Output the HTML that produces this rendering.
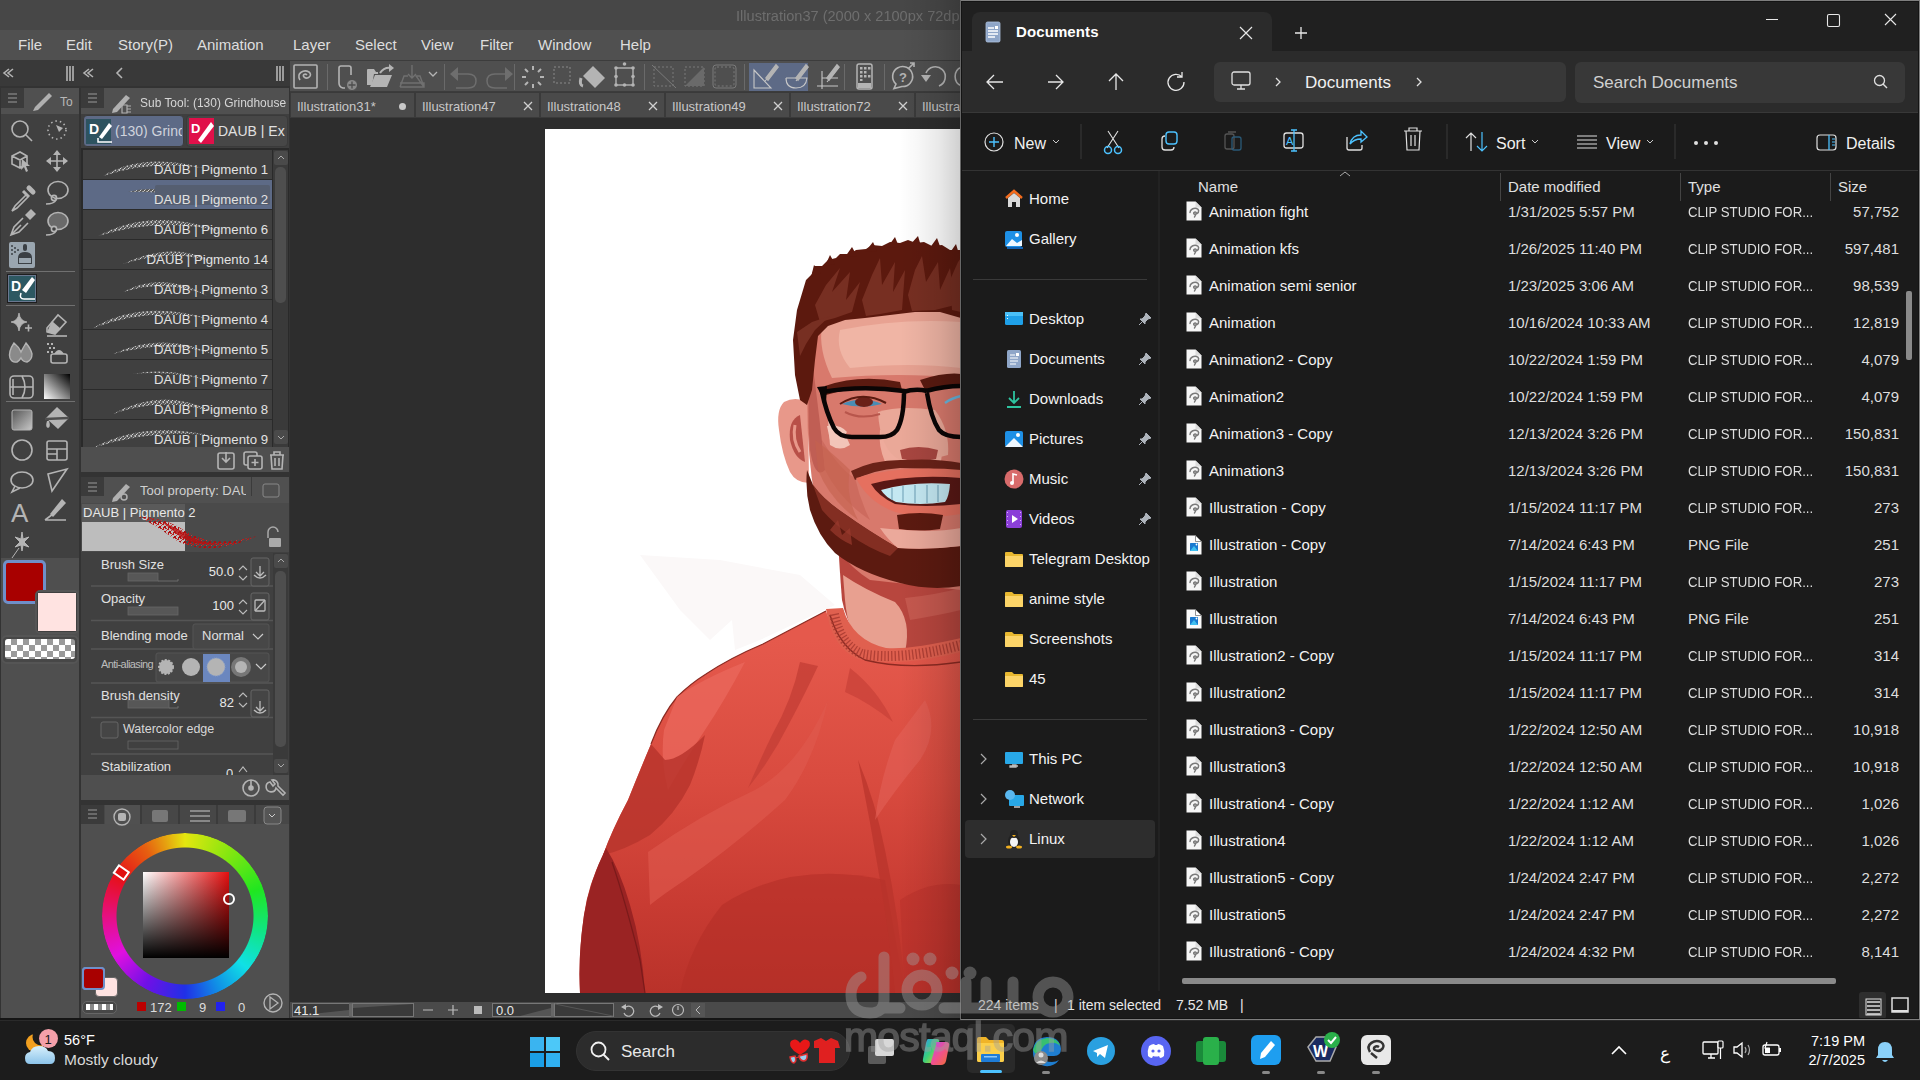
<!DOCTYPE html>
<html><head><meta charset="utf-8">
<style>
*{margin:0;padding:0;box-sizing:border-box}
html,body{width:1920px;height:1080px;overflow:hidden;background:#2d2d2d;font-family:"Liberation Sans",sans-serif}
.a{position:absolute}
.t{position:absolute;white-space:nowrap;line-height:1}
svg{position:absolute;overflow:visible}
/* CSP */
#csp{left:0;top:0;width:961px;height:1020px;background:#2d2d2d;overflow:hidden}
.menu{color:#dedede;font-size:15px;top:37px}
.ico{stroke:#b4b4b4;fill:none;stroke-width:1.6}
.icof{fill:#b4b4b4}
.brow{position:absolute;left:83px;width:189px;height:29px;background:#404040}
.bname{position:absolute;right:4px;top:13px;color:#e2e2e2;font-size:13.2px;white-space:nowrap;line-height:1}
.tab{position:absolute;top:92px;height:26px;background:#4f4f4f;border-right:2px solid #3a3a3a}
.tabt{position:absolute;left:6px;top:7px;color:#c8c8c8;font-size:13px;line-height:1;white-space:nowrap}
/* Explorer */
#exp{left:960px;top:0;width:960px;height:1020px;background:#1b1b1b;border:1px solid #7e7e7e;overflow:hidden}
.nav{color:#f0f0f0;font-size:15px}
.row{position:absolute;left:200px;width:740px;height:37px}
.ex{font-size:15px;color:#dedede;line-height:1;white-space:nowrap}
.rn{position:absolute;left:48px;top:11px;color:#f2f2f2;font-size:15px;line-height:1;white-space:nowrap}
.rd{position:absolute;left:347px;top:11px;color:#dcdcdc;font-size:15px;line-height:1;white-space:nowrap}
.rt{position:absolute;left:527px;top:11px;color:#dcdcdc;font-size:15px;line-height:1;white-space:nowrap}
.rs{position:absolute;right:0px;top:11px;color:#dcdcdc;font-size:15px;line-height:1;white-space:nowrap;text-align:right}
/* taskbar */
#tb{left:0;top:1020px;width:1920px;height:60px;background:#1c1c1c;border-top:1px solid #2a2a2a}
</style></head><body>
<svg width="0" height="0" style="position:absolute"><defs><pattern id="speck" width="7" height="7" patternUnits="userSpaceOnUse"><rect x="0" y="0" width="1" height="1" fill="#a8a8a8"/><rect x="3" y="1" width="1" height="1" fill="#c8c8c8"/><rect x="5" y="3" width="1" height="1" fill="#999"/><rect x="1" y="4" width="1" height="1" fill="#bbb"/><rect x="4" y="5" width="1" height="1" fill="#aaa"/><rect x="2" y="2" width="1" height="1" fill="#888"/><rect x="6" y="6" width="1" height="1" fill="#ccc"/><rect x="0" y="6" width="1" height="1" fill="#999"/><rect x="6" y="0" width="1" height="1" fill="#aaa"/><rect x="2" y="6" width="1" height="1" fill="#bbb"/></pattern><pattern id="speck2" width="4" height="4" patternUnits="userSpaceOnUse"><rect width="4" height="4" fill="#5a5a5a"/><rect x="0" y="0" width="1" height="1" fill="#c8c8c8"/><rect x="2" y="1" width="1" height="1" fill="#aaa"/><rect x="1" y="2" width="1" height="1" fill="#d8d8d8"/><rect x="3" y="3" width="1" height="1" fill="#999"/><rect x="3" y="0" width="1" height="1" fill="#888"/><rect x="0" y="3" width="1" height="1" fill="#b8b8b8"/></pattern><pattern id="rspeck" width="5" height="5" patternUnits="userSpaceOnUse"><rect x="0" y="0" width="2" height="1" fill="#c01a1a"/><rect x="2" y="2" width="2" height="2" fill="#a81010"/><rect x="4" y="1" width="1" height="1" fill="#d03030"/><rect x="1" y="3" width="1" height="2" fill="#b51515"/><rect x="3" y="4" width="2" height="1" fill="#c02020"/></pattern></defs></svg>
<div id="csp" class="a">
  <!-- title bar -->
  <div class="a" style="left:0;top:0;width:961px;height:30px;background:#474747"></div>
  <div class="t" style="left:736px;top:8px;color:#6e6e6e;font-size:15.5px;transform:scaleX(0.94);transform-origin:0 0">Illustration37 (2000 x 2100px 72dpi 41.1%)</div>
  <!-- menu -->
  <div class="a" style="left:0;top:30px;width:961px;height:30px;background:#505050"></div>
  <div class="t menu" style="left:18px">File</div>
  <div class="t menu" style="left:66px">Edit</div>
  <div class="t menu" style="left:118px">Story(P)</div>
  <div class="t menu" style="left:197px">Animation</div>
  <div class="t menu" style="left:293px">Layer</div>
  <div class="t menu" style="left:355px">Select</div>
  <div class="t menu" style="left:421px">View</div>
  <div class="t menu" style="left:480px">Filter</div>
  <div class="t menu" style="left:538px">Window</div>
  <div class="t menu" style="left:620px">Help</div>
  <!-- panel header row -->
  <div class="a" style="left:0;top:60px;width:290px;height:26px;background:#393939"></div>
  <div class="a" style="left:0;top:86px;width:290px;height:934px;background:#333"></div>

  <!-- LEFT PANEL HEADER ICONS -->
  <svg style="left:0;top:60px" width="290" height="26">
    <path d="M9 9 L4 13 L9 17 M13 9 L8 13 L13 17" class="ico" stroke-width="1.2"/>
    <path d="M67 6V21 M70 6V21 M73 6V21" class="ico" stroke-width="1.1"/>
    <path d="M89 9 L84 13 L89 17 M93 9 L88 13 L93 17" class="ico" stroke-width="1.2"/>
    <path d="M122 8 L117 13 L122 18" class="ico" stroke-width="1.2"/>
    <path d="M277 6V21 M280 6V21 M283 6V21" class="ico" stroke-width="1.1"/>
  </svg>
  <!-- TOOL column -->
  <div class="a" style="left:1px;top:88px;width:78px;height:26px;background:#505050"></div>
  <div class="a" style="left:1px;top:88px;width:23px;height:20px;background:#3b3b3b"></div>
  <div class="a" style="left:1px;top:114px;width:78px;height:905px;background:#4f4f4f"></div>
  <div class="a" style="left:1px;top:114px;width:78px;height:444px;background:#404040"></div>
  <svg style="left:0;top:88px" width="80" height="26">
    <path d="M8 6H17 M8 10H17 M8 14H17" stroke="#9a9a9a" stroke-width="1"/>
    <path d="M35 19 L49 5 L52 8 L38 22 L33 23 Z" fill="#b0b0b0"/>
    <text x="60" y="18" fill="#b8b8b8" font-size="12" font-family="Liberation Sans">To</text>
  </svg>
  <svg style="left:0;top:114px" width="80" height="560">
    <g class="ico">
      <circle cx="20" cy="15" r="8"/><path d="M26 21 L32 27"/>
      <circle cx="57" cy="16" r="9" stroke-dasharray="1.5 3"/>
      <path d="M12 42 L20 38 L27 42 V50 L20 54 L12 50 Z M12 42 L20 46 L27 42 M20 46V54"/>
      <path d="M57 37V57 M47 47H67"/>
      <path d="M26 81 L15 92 L12 97 L17 94 L28 83"/>
      <ellipse cx="58" cy="76" rx="10" ry="8.5"/>
      <circle cx="54" cy="84" r="2.6"/><path d="M46 90 Q54 90 56 86"/>
      <path d="M23 104 L14 113 L11 121 L19 118 L28 109 M12 120 L21 111"/>
      <ellipse cx="58" cy="107" rx="10" ry="8.5" fill="#6a6a6a"/>
      <circle cx="54" cy="115" r="2.6" fill="#404040"/><path d="M46 121 Q54 121 56 117"/>
    </g>
    <path d="M29 74 L33 78" stroke="#b4b4b4" stroke-width="5" stroke-linecap="round"/><path d="M23 77 L29 83" stroke="#b4b4b4" stroke-width="3"/><path d="M25 101 L31 95 L36 100 L30 106Z" fill="#b4b4b4"/>
    <path d="M53 41 L57 36 L61 41 Z M53 53 L57 58 L61 53 Z M51 43 L46 47 L51 51 Z M63 43 L68 47 L63 51 Z" class="icof"/>
    <path d="M22 45 L30 52 L26 52 L28 57 L26 58 L24 53 L21 56 Z" class="icof"/>
    <path d="M56 11 L63 14 L59 18 Z" class="icof"/>
    <rect x="9" y="128" width="26" height="26" rx="2" fill="#9aa6b0"/>
    <g fill="#3a3f44"><circle cx="12" cy="132" r="1"/><circle cx="15" cy="134" r="1"/><circle cx="12" cy="136" r="1"/><circle cx="15" cy="138" r="1"/><circle cx="12" cy="140" r="1"/><circle cx="18" cy="136" r="1"/></g>
    <rect x="23" y="130" width="4" height="7" rx="2" fill="#3a3f44"/>
    <path d="M18 150 V144 Q18 138 25 138 Q32 138 32 144 V150Z" fill="#3a3f44"/><rect x="19" y="144" width="12" height="5" fill="#9aa6b0"/>
    <path d="M6 157.5H75" stroke="#707070" stroke-width="1"/>
    <rect x="7" y="160" width="30" height="29" fill="#1e1e1e"/>
    <rect x="8" y="161" width="28" height="27" fill="#6a7890"/>
    <rect x="9" y="162" width="26" height="25" fill="#2d5862"/>
    <text x="11" y="177" fill="#fff" font-size="14" font-weight="bold" font-family="Liberation Sans" transform="scale(1,1)">D</text>
    <path d="M22 176 L32 163 L35 166 L26 179 Z" fill="#fff"/>
    <path d="M21 179 Q19 185 24 185 H35" stroke="#fff" fill="none" stroke-width="1.5"/>
    <path d="M6 191.5H75" stroke="#707070" stroke-width="1"/>
    <path d="M19 199 Q20 207 27 208 Q20 209 19 217 Q18 209 11 208 Q18 207 19 199Z" class="icof" stroke="#b4b4b4" stroke-width="0.8"/><path d="M25 214h7 M28.5 210.5v7" stroke="#b4b4b4" stroke-width="1.6"/>
    <path d="M47 214 L58 201 L66 208 L55 220 L47 218 Z" fill="none" stroke="#b4b4b4" stroke-width="1.6"/>
    <path d="M52 207 L61 215 L55 220 L47 218 Z" class="icof"/>
    <path d="M47 222H67" class="ico"/>
    <path d="M14 229 Q8 238 10 244 Q12 249 17 248 Q19 247 21 244 Q23 248 27 248 Q32 246 32 240 Q31 235 26 229 Q23 234 21 238 Q19 233 14 229Z" fill="#8a8a8a" stroke="#b4b4b4" stroke-width="1.4"/>
    <path d="M47 229h2v2h-2z M51 229h2v2h-2z M49 233h2v2h-2z M53 233h2v2h-2z M47 237h2v2h-2z M51 237h2v2h-2z" class="icof"/>
    <rect x="51" y="240" width="16" height="9" rx="2" fill="none" stroke="#b4b4b4" stroke-width="1.6"/>
    <path d="M54 240 Q59 232 64 240Z" class="icof"/>
    <rect x="10" y="262" width="23" height="22" rx="4" class="ico"/>
    <path d="M10 273H33 M22 262 Q28 273 22 284 M13 265V281" class="ico" stroke-width="1.2"/>
    <defs><linearGradient id="gr1" x1="0" y1="1" x2="1" y2="0"><stop offset="0" stop-color="#fff"/><stop offset="1" stop-color="#000"/></linearGradient></defs>
    <rect x="44" y="260" width="26" height="25" fill="url(#gr1)"/>
    <path d="M6 287.5H75" stroke="#707070" stroke-width="1"/>
    <defs><linearGradient id="gr2" x1="0" y1="0" x2="1" y2="1"><stop offset="0" stop-color="#555"/><stop offset="1" stop-color="#c8c8c8"/></linearGradient></defs>
    <rect x="12" y="296" width="20" height="20" rx="2" fill="url(#gr2)" stroke="#b4b4b4" stroke-width="1"/>
    <path d="M46 304 L57 293 L69 304 L58 315 Z" class="icof"/>
    <path d="M45 305 L69 304" stroke="#4f4f4f" stroke-width="2.5"/><path d="M47 307 Q45 313 48 314 Q51 313 49 307Z" class="icof"/>
    <circle cx="22" cy="336" r="10" class="ico"/>
    <rect x="47" y="327" width="20" height="19" rx="2" class="ico"/>
    <path d="M47 335H67 M57 335V346 M47 340H57" class="ico" stroke-width="1.2"/>
    <ellipse cx="22" cy="366" rx="11" ry="8" class="ico"/>
    <path d="M15 372 L12 378 L20 374" class="ico"/>
    <path d="M48 360 L67 355 L52 377 Z" class="ico" stroke-width="2"/>
    <text x="11" y="408" fill="#b4b4b4" font-size="26" font-family="Liberation Sans">A</text>
    <path d="M50 400 L62 385 L66 389 L53 403 Z" class="icof"/>
    <path d="M45 406 L66 406 M45 406 L53 400" class="ico"/>
    <path d="M22 418 L23 425 L29 423 L24 428 L29 433 L23 431 L22 437 L21 431 L15 433 L20 428 L15 423 L21 425Z M12 444 L19 434" class="icof" stroke="#b4b4b4" stroke-width="1"/>
  </svg>
  <!-- color swatches -->
  <div class="a" style="left:3px;top:560px;width:43px;height:44px;border:3px solid #6f8fc9;border-radius:5px;background:#a80000"></div>
  <div class="a" style="left:35px;top:590px;width:44px;height:44px;border:2px solid #555;border-radius:5px;background:#3f3f3f"></div>
  <div class="a" style="left:38px;top:593px;width:38px;height:38px;background:#ffe3e1"></div>
  <div class="a" style="left:3px;top:618px;width:43px;height:0"></div>
  <div class="a" style="left:1px;top:635px;width:78px;height:29px;border:2px solid #555;border-radius:6px;background:#474747"></div>
  <div class="a" style="left:5px;top:639px;width:70px;height:20px;background-color:#fff;background-image:linear-gradient(45deg,#9a9a9a 25%,transparent 25%,transparent 75%,#9a9a9a 75%),linear-gradient(45deg,#9a9a9a 25%,transparent 25%,transparent 75%,#9a9a9a 75%);background-size:12px 12px;background-position:0 0,6px 6px;border-radius:3px"></div>
  <div class="a" style="left:1px;top:560px;width:78px;height:0"></div>

  <!-- SUBTOOL PANEL -->
  <div class="a" style="left:81px;top:88px;width:208px;height:26px;background:#505050"></div>
  <div class="a" style="left:81px;top:88px;width:23px;height:20px;background:#3b3b3b"></div>
  <svg style="left:80px;top:88px" width="210" height="26">
    <path d="M8 6H17 M8 10H17 M8 14H17" stroke="#9a9a9a" stroke-width="1"/>
    <path d="M33 21 L46 7 L50 10 L37 24 L32 25 Z" fill="#b0b0b0"/>
    <path d="M42 17h5v8h-5z M47 18h4 M47 21h4 M47 24h4" stroke="#b0b0b0" fill="none" stroke-width="1.2"/>
  </svg>
  <div class="t" style="left:140px;top:96px;color:#d6d6d6;font-size:13px;transform:scaleX(0.92);transform-origin:0 0">Sub Tool: (130) Grindhouse</div>
  <div class="a" style="left:81px;top:114px;width:208px;height:36px;background:#3f3f3f"></div>
  <div class="a" style="left:83px;top:115px;width:101px;height:32px;background:#5d6a86;border-radius:4px;border:1px solid #3a3a3a"></div>
  <div class="a" style="left:86px;top:119px;width:25px;height:25px;background:#2d5360"></div>
  <svg style="left:87px;top:118px" width="26" height="26"><text x="2" y="16" fill="#fff" font-size="14" font-weight="bold" font-family="Liberation Sans">D</text><path d="M12 19 L22 5 L25 8 L15 21Z" fill="#fff"/><path d="M11 20 V24 H25" stroke="#fff" fill="none" stroke-width="1.5"/></svg>
  <div class="t" style="left:115px;top:124px;color:#cfd3dc;font-size:14px;width:67px;overflow:hidden">(130) Grindhouse</div>
  <div class="a" style="left:186px;top:115px;width:102px;height:32px;background:#474747;border-radius:4px;border:1px solid #3a3a3a"></div>
  <div class="a" style="left:189px;top:118px;width:25px;height:26px;background:#e0104a"></div>
  <svg style="left:189px;top:118px" width="26" height="26"><text x="2" y="15" fill="#fff" font-size="13" font-weight="bold" font-family="Liberation Sans">D</text><path d="M9 22 L22 4 L25 8 L12 25Z" fill="#fff"/></svg>
  <div class="t" style="left:218px;top:124px;color:#e0e0e0;font-size:14px;width:67px;overflow:hidden">DAUB | Expressive</div>
  <div class="a" style="left:81px;top:148px;width:208px;height:300px;background:#2a2a2a"></div>
<div class="brow" style="top:150px;background:#404040"><svg style="left:0;top:0" width="189" height="29"><path d="M20 26 Q60 2 120 18 Q70 10 20 26Z" fill="url(#speck2)"/></svg><div class="bname">DAUB | Pigmento 1</div></div>
<div class="brow" style="top:180px;background:#5d6a86"><svg style="left:0;top:0" width="189" height="29"><path d="M45 12 Q80 2 130 26 Q90 10 45 12Z" fill="url(#speck2)"/></svg><div class="a" style="right:2px;top:5px;width:115px;height:20px;background:#555e70;border-radius:2px"></div><div class="bname">DAUB | Pigmento 2</div></div>
<div class="brow" style="top:210px;background:#404040"><svg style="left:0;top:0" width="189" height="29"><path d="M15 26 Q70 -4 140 22 Q80 6 15 26Z" fill="url(#speck2)"/></svg><div class="bname">DAUB | Pigmento 6</div></div>
<div class="brow" style="top:240px;background:#404040"><svg style="left:0;top:0" width="189" height="29"><path d="M40 24 Q90 0 130 22 Q90 8 40 24Z" fill="url(#speck2)"/></svg><div class="bname">DAUB | Pigmento 14</div></div>
<div class="brow" style="top:270px;background:#404040"><svg style="left:0;top:0" width="189" height="29"><path d="M40 22 Q80 0 125 26 Q85 8 40 22Z" fill="url(#speck2)"/></svg><div class="bname">DAUB | Pigmento 3</div></div>
<div class="brow" style="top:300px;background:#404040"><svg style="left:0;top:0" width="189" height="29"><path d="M10 28 Q60 -2 130 20 Q70 6 10 28Z" fill="url(#speck2)"/></svg><div class="bname">DAUB | Pigmento 4</div></div>
<div class="brow" style="top:330px;background:#404040"><svg style="left:0;top:0" width="189" height="29"><path d="M30 24 Q80 0 135 26 Q90 8 30 24Z" fill="url(#speck2)"/></svg><div class="bname">DAUB | Pigmento 5</div></div>
<div class="brow" style="top:360px;background:#404040"><svg style="left:0;top:0" width="189" height="29"><path d="M50 14 Q90 6 135 24 Q95 10 50 14Z" fill="url(#speck2)"/></svg><div class="bname">DAUB | Pigmento 7</div></div>
<div class="brow" style="top:390px;background:#404040"><svg style="left:0;top:0" width="189" height="29"><path d="M30 24 Q80 -4 130 22 Q80 6 30 24Z" fill="url(#speck2)"/></svg><div class="bname">DAUB | Pigmento 8</div></div>
<div class="brow" style="top:420px;background:#404040"><svg style="left:0;top:0" width="189" height="29"><path d="M10 28 Q60 0 130 16 Q70 8 10 28Z" fill="url(#speck2)"/></svg><div class="bname">DAUB | Pigmento 9</div></div>

  <div class="a" style="left:273px;top:150px;width:15px;height:297px;background:#3a3a3a"></div>
  <div class="a" style="left:274px;top:151px;width:14px;height:14px;background:#4a4a4a;border-radius:2px"></div>
  <div class="a" style="left:275px;top:167px;width:11px;height:136px;background:#4e4e4e;border-radius:5px"></div>
  <div class="a" style="left:274px;top:430px;width:14px;height:14px;background:#4a4a4a;border-radius:2px"></div>
  <svg style="left:274px;top:150px" width="14" height="297"><path d="M4 9 L7 6 L10 9" stroke="#aaa" fill="none"/><path d="M4 286 L7 289 L10 286" stroke="#aaa" fill="none"/></svg>
  <div class="a" style="left:81px;top:447px;width:208px;height:25px;background:#4f4f4f"></div>
  <svg style="left:210px;top:447px" width="80" height="25" class="ico" style="">
    <g class="ico" stroke-width="1.3"><rect x="8" y="6" width="16" height="16" rx="2"/><path d="M16 5V15 M12 11 L16 15 L20 11"/>
    <rect x="34" y="5" width="13" height="13" rx="2"/><rect x="38" y="9" width="14" height="13" rx="2" fill="#4a4a4a"/><path d="M45 12V19 M41.5 15.5H48.5"/>
    <path d="M60 8H74 M64 8V5H70V8 M61 8 L62 22H72 L73 8 M65 11V19 M69 11V19"/></g>
  </svg>
  <div class="a" style="left:81px;top:472px;width:208px;height:5px;background:#333"></div>
  <!-- tool property -->
  <div class="a" style="left:81px;top:477px;width:208px;height:26px;background:#505050"></div>
  <div class="a" style="left:81px;top:477px;width:23px;height:19px;background:#3b3b3b"></div>
  <div class="a" style="left:251px;top:477px;width:38px;height:19px;background:#505050;border-left:1px solid #3b3b3b"></div>
  <svg style="left:80px;top:477px" width="210" height="26">
    <path d="M8 6H17 M8 10H17 M8 14H17" stroke="#9a9a9a" stroke-width="1"/>
    <path d="M33 21 L46 7 L50 10 L37 24 L32 25 Z" fill="#b0b0b0"/>
    <circle cx="44" cy="20" r="3" fill="none" stroke="#b0b0b0" stroke-width="1.5"/>
    <rect x="183" y="7" width="16" height="13" rx="2" fill="none" stroke="#888" stroke-width="1"/>
  </svg>
  <div class="t" style="left:140px;top:484px;color:#d0d0d0;font-size:13px;width:106px;overflow:hidden">Tool property: DAUB</div>
  <div class="a" style="left:81px;top:503px;width:208px;height:49px;background:#4a4a4a"></div>
  <div class="a" style="left:82px;top:504px;width:103px;height:47px;background:#bdbdbd"></div>
  <div class="a" style="left:82px;top:504px;width:103px;height:18px;background:#5a5a5a"></div>
  <svg style="left:82px;top:504px" width="200" height="47"><path d="M55 12 Q80 14 95 22 Q110 32 125 36 Q145 40 175 32 Q145 46 120 44 Q100 42 88 32 Q75 22 55 12Z" fill="url(#rspeck)"/><path d="M80 18 Q100 26 110 34 Q125 40 140 40 Q115 42 100 34 Q90 26 80 18Z" fill="#b81010" opacity="0.8"/>
  <path d="M186 34 v-6 a5 5 0 0 1 10 0" stroke="#aaa" fill="none" stroke-width="1.5"/><rect x="187" y="34" width="12" height="9" rx="1" fill="#aaa"/></svg>
  <div class="t" style="left:83px;top:506px;color:#e8e8e8;font-size:13px">DAUB | Pigmento 2</div>
  <div class="a" style="left:81px;top:552px;width:208px;height:223px;background:#404040"></div>

  <!-- property rows -->
  <svg style="left:81px;top:552px" width="208" height="223">
    <g stroke="#555" stroke-width="1.5"><path d="M10 34H192 M10 68.5H192 M10 97H192 M10 131H192 M10 165.5H192 M10 202H192"/></g>
    <!-- brush size slider -->
    <rect x="47" y="21" width="30" height="8" fill="#575757" stroke="#666" stroke-width="0.8"/>
    <path d="M77 29H97V27" stroke="#777" fill="none" stroke-width="0.8"/>
    <rect x="47" y="55" width="50" height="8" fill="#575757" stroke="#666" stroke-width="0.8"/>
    <rect x="47" y="148" width="41" height="8" fill="#575757" stroke="#666" stroke-width="0.8"/>
    <path d="M88 156H97V154" stroke="#777" fill="none" stroke-width="0.8"/>
    <rect x="47" y="189" width="50" height="8" fill="none" stroke="#666" stroke-width="0.8"/>
    <!-- spinners -->
    <g stroke="#bbb" fill="none" stroke-width="1.1">
      <path d="M158 18 L162 14 L166 18 M158 24 L162 28 L166 24"/>
      <path d="M158 52 L162 48 L166 52 M158 58 L162 62 L166 58"/>
      <path d="M158 145 L162 141 L166 145 M158 151 L162 155 L166 151"/>
      <path d="M158 220 L162 215 L166 220"/>
    </g>
    <g stroke="#666" fill="#454545" stroke-width="1"><rect x="170" y="6" width="18" height="28" rx="2"/><rect x="170" y="41" width="18" height="27" rx="2"/><rect x="170" y="138" width="18" height="27" rx="2"/></g>
    <g stroke="#bbb" fill="none" stroke-width="1.3"><path d="M179 14V24 M175 20 L179 24 L183 20 M173 23 Q179 29 185 23"/><path d="M179 149V159 M175 155 L179 159 L183 155 M173 158 Q179 164 185 158"/>
    <rect x="174" y="48" width="10" height="11" rx="1"/><path d="M174 59 L184 48"/></g>
    <!-- blending dropdown -->
    <rect x="112" y="72" width="76" height="25" rx="2" fill="#474747" stroke="#555"/>
    <path d="M172 82 L177 87 L182 82" stroke="#ccc" fill="none" stroke-width="1.2"/>
    <!-- antialias -->
    <g transform="translate(0,-3)"><rect x="75" y="104" width="113" height="29" rx="2" fill="#474747" stroke="#555"/>
    <rect x="122" y="105" width="27" height="28" fill="#6b87bf"/>
    <circle cx="85" cy="118" r="7" fill="#b4b4b4" stroke="#b4b4b4" stroke-width="2" stroke-dasharray="2 1.5"/>
    <circle cx="110" cy="118" r="9" fill="#b4b4b4"/>
    <circle cx="135" cy="118" r="9" fill="#b4b4b4" stroke="#8da3cc" stroke-width="1" stroke-dasharray="1 1"/>
    <circle cx="160" cy="118" r="10" fill="#777"/><circle cx="160" cy="118" r="6" fill="#b4b4b4"/>
    <path d="M175 115 L180 120 L185 115" stroke="#ccc" fill="none" stroke-width="1.2"/></g>
    <!-- checkbox -->
    <rect x="20" y="170" width="17" height="16" rx="2" fill="#454545" stroke="#666"/>
  </svg>
  <div class="t" style="left:101px;top:558px;color:#e0e0e0;font-size:13px">Brush Size</div>
  <div class="t" style="left:184px;width:50px;text-align:right;top:565px;color:#e8e8e8;font-size:13px">50.0</div>
  <div class="t" style="left:101px;top:592px;color:#e0e0e0;font-size:13px">Opacity</div>
  <div class="t" style="left:184px;width:50px;text-align:right;top:599px;color:#e8e8e8;font-size:13px">100</div>
  <div class="t" style="left:101px;top:629px;color:#e0e0e0;font-size:13px">Blending mode</div>
  <div class="t" style="left:202px;top:629px;color:#e0e0e0;font-size:13px">Normal</div>
  <div class="t" style="left:101px;top:659px;color:#bdbdbd;font-size:11px;letter-spacing:-0.6px;width:53px;overflow:hidden">Anti-aliasing</div>
  <div class="t" style="left:101px;top:689px;color:#e0e0e0;font-size:13px">Brush density</div>
  <div class="t" style="left:184px;width:50px;text-align:right;top:696px;color:#e8e8e8;font-size:13px">82</div>
  <div class="t" style="left:123px;top:723px;color:#d8d8d8;font-size:12.5px">Watercolor edge</div>
  <div class="t" style="left:101px;top:760px;color:#e0e0e0;font-size:13px">Stabilization</div>
  <div class="t" style="left:226px;top:767px;color:#e0e0e0;font-size:13px;height:8px;overflow:hidden">0</div>
  <!-- prop scrollbar -->
  <div class="a" style="left:273px;top:553px;width:15px;height:222px;background:#3a3a3a"></div>
  <div class="a" style="left:274px;top:554px;width:14px;height:14px;background:#4a4a4a;border-radius:2px"></div>
  <div class="a" style="left:275px;top:571px;width:11px;height:176px;background:#4e4e4e;border-radius:5px"></div>
  <div class="a" style="left:274px;top:759px;width:14px;height:14px;background:#4a4a4a;border-radius:2px"></div>
  <svg style="left:274px;top:553px" width="14" height="222"><path d="M4 9 L7 6 L10 9" stroke="#aaa" fill="none"/><path d="M4 211 L7 214 L10 211" stroke="#aaa" fill="none"/></svg>
  <div class="a" style="left:81px;top:775px;width:208px;height:25px;background:#4f4f4f"></div>
  <svg style="left:230px;top:775px" width="60" height="25"><g class="ico" stroke-width="1.4"><circle cx="21" cy="13" r="8"/><circle cx="21" cy="13" r="2" fill="#b4b4b4"/><path d="M21 5V13"/>
  <path d="M40 7 a5 5 0 1 0 6 6 L53 20 L55 18 L48 11 a5 5 0 0 0 -6 -6 L45 9 L43 11 Z"/></g></svg>
  <div class="a" style="left:81px;top:800px;width:208px;height:5px;background:#333"></div>
  <!-- color wheel panel -->
  <div class="a" style="left:81px;top:805px;width:208px;height:213px;background:#4f4f4f"></div>
  <div class="a" style="left:81px;top:805px;width:208px;height:19px;background:#474747"></div>
  <div class="a" style="left:81px;top:805px;width:23px;height:19px;background:#3b3b3b"></div>
  <div class="a" style="left:105px;top:805px;width:35px;height:19px;background:#505050"></div>
  <svg style="left:80px;top:805px" width="210" height="20">
    <path d="M8 5H17 M8 9H17 M8 13H17" stroke="#9a9a9a" stroke-width="1"/>
    <circle cx="42" cy="12" r="8" fill="none" stroke="#b4b4b4" stroke-width="1.4"/><rect x="38" y="8" width="8" height="8" rx="2" fill="#b4b4b4"/>
    <path d="M61 0V19 M99 0V19 M137 0V19 M175 0V19" stroke="#3b3b3b" stroke-width="2"/>
    <rect x="72" y="5" width="16" height="12" rx="2" fill="#777"/>
    <path d="M110 6H130 M110 11H130 M110 16H130" stroke="#888" stroke-width="2"/>
    <rect x="148" y="5" width="18" height="12" rx="2" fill="#777"/>
    <rect x="184" y="2" width="17" height="17" rx="3" fill="#555" stroke="#888"/>
    <path d="M189 9 L192 12 L195 9" stroke="#ccc" fill="none"/>
  </svg>
  <div class="a" style="left:102px;top:833px;width:166px;height:166px;border-radius:50%;background:conic-gradient(from 0deg,#e4e60f,#84e610,#20e620 70deg,#10e680,#10e0e6 130deg,#1090e6,#2030e6 180deg,#7010e6,#e010e0 240deg,#e61080,#e6101a 300deg,#e66010 330deg,#e6a010,#e4e60f);-webkit-mask:radial-gradient(circle,transparent 68px,#000 69px);mask:radial-gradient(circle,transparent 68px,#000 69px)"></div>
  <svg style="left:81px;top:824px" width="208" height="194">
    <defs>
      <linearGradient id="svw" x1="0" y1="0" x2="1" y2="0"><stop offset="0" stop-color="#fff"/><stop offset="1" stop-color="#e60f0f"/></linearGradient>
      <linearGradient id="svb" x1="0" y1="0" x2="0" y2="1"><stop offset="0" stop-color="#000" stop-opacity="0"/><stop offset="1" stop-color="#000"/></linearGradient>
    </defs>
    <g transform="translate(104,92)">

      <rect x="-42" y="-44" width="86" height="86" fill="url(#svw)"/>
      <rect x="-42" y="-44" width="86" height="86" fill="url(#svb)"/>
      <circle cx="44" cy="-17" r="5" fill="none" stroke="#fff" stroke-width="2"/>
      <rect x="-70" y="-48" width="12" height="9" fill="#e01010" stroke="#fff" stroke-width="2" transform="rotate(35 -64 -43)"/>
    </g>
  </svg>
  <div class="a" style="left:82px;top:967px;width:23px;height:23px;border:2px solid #6f8fc9;border-radius:4px;background:#a80000"></div>
  <div class="a" style="left:95px;top:977px;width:23px;height:20px;border:1px solid #666;border-radius:4px;background:#ffe3e1;z-index:0"></div>
  <div class="a" style="left:82px;top:967px;width:23px;height:23px;border:2px solid #6f8fc9;border-radius:4px;background:#a80000"></div>
  <div class="a" style="left:82px;top:1001px;width:35px;height:13px;border:1px solid #666;border-radius:5px;background:#474747"></div>
  <div class="a" style="left:86px;top:1004px;width:27px;height:6px;background:repeating-linear-gradient(90deg,#fff 0 4px,#888 4px 8px)"></div>
  <div class="a" style="left:137px;top:1002px;width:9px;height:9px;background:#b00"></div>
  <div class="t" style="left:150px;top:1001px;color:#ddd;font-size:13px">172</div>
  <div class="a" style="left:177px;top:1002px;width:9px;height:9px;background:#0b0"></div>
  <div class="t" style="left:199px;top:1001px;color:#ddd;font-size:13px">9</div>
  <div class="a" style="left:216px;top:1002px;width:9px;height:9px;background:#22e"></div>
  <div class="t" style="left:238px;top:1001px;color:#ddd;font-size:13px">0</div>
  <svg style="left:262px;top:992px" width="24" height="24"><circle cx="11" cy="11" r="9" fill="none" stroke="#b4b4b4" stroke-width="1.4"/><path d="M8 5 L16 11 L8 17Z" fill="none" stroke="#b4b4b4" stroke-width="1.3"/></svg>
  <!-- toolbar -->
  <div class="a" style="left:290px;top:60px;width:671px;height:32px;background:#4f4f4f;border-top:1px solid #3c3c3c;border-bottom:1px solid #3c3c3c"></div>

  <!-- TOOLBAR ICONS -->
  <svg style="left:290px;top:61px" width="671" height="31">
    <g stroke="#6a6a6a" stroke-width="1"><path d="M37.5 3V29 M154.5 3V29 M224.5 3V29 M354.5 3V29 M454.5 3V29 M554.5 3V29 M594.5 3V29"/></g>
    <rect x="459" y="2" width="59" height="28" fill="#5d6a86"/>
    <g class="ico" stroke-width="1.4">
      <rect x="4" y="4" width="23" height="23" rx="1"/>
      <path d="M10 19 C6 12 14 8 19 11 C23 14 18 19 14 16 C12 14 15 12 17 14"/>
      <path d="M49 22 V7 Q49 5 51 5 H59 Q61 5 61 7 V14 M49 22 Q49 26 53 27 H55"/>
    </g>
    <circle cx="62" cy="24" r="5.5" fill="#8a8a8a" stroke="#4d4d4d" stroke-width="1"/><path d="M62 20.5V27.5 M58.5 24H65.5" stroke="#4d4d4d" stroke-width="1.3"/>
    <path d="M77 24 V9 Q77 8 78 8 H84 L86 11 H88 V13 H84 L82 24Z" fill="#b4b4b4"/><path d="M80 26 L85 14 H102 L97 26Z" fill="#b4b4b4"/>
    <path d="M90 12 Q94 6 101 7" stroke="#b4b4b4" stroke-width="2" fill="none"/><path d="M99 3 L104 7 L99 11Z" fill="#b4b4b4"/>
    <g stroke="#707070" stroke-width="1.4" fill="none"><path d="M110 26 L114 15 H118 M126 15 H130 L134 26 Z M110 26 H134 V22 H110"/><path d="M122 4V17 M118 13 L122 17 L126 13"/></g>
    <path d="M139 11 L143 15 L147 11" stroke="#b4b4b4" stroke-width="1.3" fill="none"/>
    <g stroke="#6e6e6e" stroke-width="1.5" fill="none">
      <path d="M167 13 H178 Q186 13 186 20 Q186 27 178 27 H166"/>
      <path d="M216 13 H205 Q197 13 197 20 Q197 27 205 27 H217"/>
    </g>
    <path d="M160 13 L168 6 V20Z M223 13 L215 6 V20Z" fill="#6e6e6e"/>
    <g stroke="#b4b4b4" stroke-width="2"><path d="M243 5V9 M243 23V27 M232 16H236 M250 16H254 M235 8L238 11 M248 21L251 24 M235 24L238 21 M248 11L251 8"/></g>
    <rect x="264" y="6" width="16" height="16" fill="none" stroke="#8a8a8a" stroke-dasharray="2 2"/>
    <path d="M293 15 L303 5 L315 17 L305 27 Z" fill="#b4b4b4"/><path d="M291 17 Q289 24 293 25" stroke="#b4b4b4" stroke-width="3" fill="none"/>
    <rect x="326" y="7" width="17" height="17" fill="none" stroke="#b4b4b4" stroke-width="1.4"/>
    <g fill="#b4b4b4"><circle cx="326" cy="7" r="1.8"/><circle cx="343" cy="7" r="1.8"/><circle cx="326" cy="24" r="1.8"/><circle cx="343" cy="24" r="1.8"/><circle cx="334.5" cy="24" r="1.8"/><circle cx="334.5" cy="3" r="1.8"/><circle cx="326" cy="15.5" r="1.8"/><circle cx="343" cy="15.5" r="1.8"/></g>
    <g stroke="#7a7a7a" stroke-width="1" fill="none">
      <rect x="364" y="6" width="19" height="19" stroke-dasharray="2 2"/><path d="M362 4 L386 27"/>
      <rect x="395" y="6" width="19" height="19" stroke-dasharray="2 2"/>
      <rect x="425" y="6" width="19" height="19" rx="2" stroke-dasharray="2 2"/><rect x="423" y="4" width="23" height="23" rx="3"/>
    </g>
    <path d="M414 6 V25 H395 Z" fill="#6a6a6a"/>
    <g stroke="#c8c8c8" stroke-width="1.1" fill="none">
      <path d="M464 27 V9 L481 27 Z"/><path d="M475 20 L488 6"/>
      <path d="M496 17 H517 Q516 27 506 27 Q496 27 496 17"/><path d="M506 20 L518 6"/>
      <path d="M527 25 H548 M532 10 V28 M532 17 H548"/><path d="M537 21 L549 6"/>
    </g>
    <path d="M488 6 L486 4 L476 17 L478 19Z M518 6 L516 4 L506 17 L508 19Z M549 6 L547 4 L537 17 L539 19Z" fill="#b4b4b4" stroke="#b4b4b4" stroke-width="1.5"/>
    <rect x="567" y="3" width="15" height="25" rx="2" fill="none" stroke="#b4b4b4" stroke-width="1.5"/><rect x="568" y="22" width="13" height="5" fill="#b4b4b4"/>
    <g fill="#b4b4b4"><rect x="570" y="6" width="2.5" height="2.5"/><rect x="574" y="6" width="2.5" height="2.5"/><rect x="578" y="6" width="2.5" height="2.5"/><rect x="570" y="10" width="2.5" height="2.5"/><rect x="574" y="10" width="2.5" height="2.5"/><rect x="570" y="14" width="2.5" height="2.5"/><rect x="574" y="14" width="2.5" height="2.5"/><rect x="578" y="14" width="2.5" height="2.5"/><rect x="570" y="18" width="2.5" height="2"/></g>
    <g class="ico" stroke-width="1.4">
      <path d="M606 23 A10 10 0 1 1 612 25.5 L604 27.5 Z"/>
      <path d="M618 8 L624 2 M620 2 H624 V6"/>
      <path d="M649 25 A10 10 0 1 0 636 12"/>
      <path d="M672 6 A10 10 0 0 0 672 25"/>
    </g>
    <text x="609" y="21" fill="#b4b4b4" font-size="13" font-weight="bold" font-family="Liberation Sans">?</text>
    <path d="M631 14 L641 14 L636 21Z" fill="#b4b4b4"/>
  </svg>
  <!-- DOC TABS -->
  <div class="a" style="left:290px;top:92px;width:671px;height:26px;background:#3a3a3a"></div>
<div class="a" style="left:291px;top:93px;width:123px;height:24px;background:#4a4a4a;overflow:hidden"><div class="tabt">Illustration31*</div><div class="a" style="left:108px;top:10px;width:7px;height:7px;border-radius:50%;background:#c8c8c8"></div></div>
<div class="a" style="left:416px;top:93px;width:123px;height:24px;background:#4a4a4a;overflow:hidden"><div class="tabt">Illustration47</div><svg style="left:107px;top:8px" width="10" height="10"><path d="M1 1L9 9M9 1L1 9" stroke="#d0d0d0" stroke-width="1.3"/></svg></div>
<div class="a" style="left:541px;top:93px;width:123px;height:24px;background:#4a4a4a;overflow:hidden"><div class="tabt">Illustration48</div><svg style="left:107px;top:8px" width="10" height="10"><path d="M1 1L9 9M9 1L1 9" stroke="#d0d0d0" stroke-width="1.3"/></svg></div>
<div class="a" style="left:666px;top:93px;width:123px;height:24px;background:#4a4a4a;overflow:hidden"><div class="tabt">Illustration49</div><svg style="left:107px;top:8px" width="10" height="10"><path d="M1 1L9 9M9 1L1 9" stroke="#d0d0d0" stroke-width="1.3"/></svg></div>
<div class="a" style="left:791px;top:93px;width:123px;height:24px;background:#4a4a4a;overflow:hidden"><div class="tabt">Illustration72</div><svg style="left:107px;top:8px" width="10" height="10"><path d="M1 1L9 9M9 1L1 9" stroke="#d0d0d0" stroke-width="1.3"/></svg></div>
<div class="a" style="left:916px;top:93px;width:123px;height:24px;background:#4a4a4a;overflow:hidden"><div class="tabt">Illustration73</div><svg style="left:107px;top:8px" width="10" height="10"><path d="M1 1L9 9M9 1L1 9" stroke="#d0d0d0" stroke-width="1.3"/></svg></div>
  <!-- canvas area -->
  <div class="a" style="left:290px;top:118px;width:671px;height:884px;background:#2d2d2d"></div>
  <div class="a" id="canvas" style="left:545px;top:129px;width:416px;height:864px;background:#fff;overflow:hidden"><svg style="left:0;top:0" width="416" height="864" viewBox="545 129 416 864">
  <defs>
    <linearGradient id="swg" x1="0" y1="0" x2="0.3" y2="1"><stop offset="0" stop-color="#e85e54"/><stop offset="0.45" stop-color="#d84a40"/><stop offset="1" stop-color="#c93a31"/></linearGradient>
    <linearGradient id="shd" x1="0" y1="0" x2="1" y2="0"><stop offset="0" stop-color="#000" stop-opacity="0"/><stop offset="1" stop-color="#000" stop-opacity="0.22"/></linearGradient>
    <linearGradient id="fgl" x1="0" y1="0" x2="0" y2="1"><stop offset="0" stop-color="#fff" stop-opacity="0"/><stop offset="1" stop-color="#f3eded"/></linearGradient>
  </defs>
  <!-- faint bg shape -->
  <path d="M640 555 L720 560 L800 575 L835 605 L760 640 L735 650 L732 620 L710 640 L680 610Z" fill="#fbf8f8"/>
  <!-- sweater -->
  <defs><linearGradient id="swg2" x1="0" y1="640" x2="0" y2="993" gradientUnits="userSpaceOnUse"><stop offset="0" stop-color="#e5594c"/><stop offset="0.4" stop-color="#d94b3f"/><stop offset="0.75" stop-color="#c83b32"/><stop offset="1" stop-color="#b9322a"/></linearGradient></defs>
  <path d="M826 611 Q790 630 763 644 Q730 658 706 674 Q690 684 677 697 Q662 715 651 744 Q640 770 628 800 Q612 830 603 855 Q588 885 584 915 Q578 955 580 993 L961 993 L961 648 Q900 660 860 652 Q835 640 826 611Z" fill="url(#swg2)"/>
  <path d="M826 611 Q790 630 763 644 Q730 658 706 674 Q690 684 677 697 Q662 715 651 744" stroke="#8a2a22" stroke-width="1.2" fill="none"/>
  <path d="M677 697 Q700 680 745 662 Q725 700 705 730 Q685 760 668 790 Q660 760 664 730Z" fill="#ea675b" opacity="0.8"/>
  <path d="M651 744 Q640 770 628 800 Q612 830 603 855 Q625 850 650 835 Q675 815 690 785 Q700 760 705 735 Q680 760 665 760Z" fill="#b8352d" opacity="0.85"/>
  <path d="M606 848 Q590 880 584 915 Q578 955 580 993 L645 993 Q642 945 630 905 Q620 870 606 848Z" fill="#9a2323"/>
  <path d="M612 862 Q625 900 640 960 L645 993" stroke="#7a1a1a" stroke-width="1.2" fill="none"/>
  <path d="M648 852 Q700 815 755 790 Q800 765 828 700 Q815 760 785 800 Q735 845 685 880 Q665 893 650 905Z" fill="#df5a4e" opacity="0.6"/>
  <path d="M680 993 Q690 945 722 905 Q790 860 885 880 L905 993Z" fill="#b32d26" opacity="0.55"/>
  <path d="M800 662 Q792 700 772 735 Q760 760 748 788 Q772 758 790 722 Q806 692 818 666Z" fill="#c43f36" opacity="0.8"/>
  <path d="M850 668 Q878 690 893 722 Q868 702 845 692Z" fill="#c84038" opacity="0.7"/>
  <path d="M858 760 Q870 820 880 880 Q890 940 895 993 L905 993 Q900 920 885 850 Q875 800 858 760Z" fill="#b8332b" opacity="0.7"/>
  <path d="M895 740 L925 700 Q940 730 920 760 Q895 790 875 820 Q880 780 895 740Z" fill="#e4625a" opacity="0.55"/>
  <path d="M900 900 Q930 880 961 885 L961 993 L905 993Z" fill="#b8302a" opacity="0.5"/>
  <!-- neck -->
  <path d="M838 540 L961 540 L961 650 L880 652 Q850 640 842 600 Q840 575 838 540Z" fill="#b8463e"/>
  <path d="M843 575 Q865 590 895 602 Q912 620 905 652 L865 652 Q848 635 845 600Z" fill="#e8a090"/>
  <path d="M905 598 Q935 595 961 588 L961 610 Q940 615 910 620Z" fill="#c85c52" opacity="0.8"/>
  <!-- collar -->
  <path d="M826 609 Q832 648 858 659 Q900 668 961 652 L961 638 Q910 650 886 648 Q852 640 843 608 Z" fill="#e0604f"/>
  <path d="M830 615 Q840 648 865 660 Q905 670 961 662" stroke="#8c2a22" stroke-width="1.3" fill="none"/>
  <path d="M834 614 Q840 645 862 654 Q900 661 961 645" stroke="#a83a30" stroke-width="10" stroke-dasharray="1.3 2.2" fill="none" opacity="0.85"/>
  <!-- ear -->
  <path d="M808 402 Q795 396 784 402 Q776 410 779 430 Q782 455 790 472 Q796 483 809 483 Z" fill="#e8988a"/>
  <path d="M800 415 Q788 420 790 440 Q794 458 805 462 Z" fill="#b85048"/>
  <path d="M795 425 Q792 440 800 452" stroke="#e8988a" stroke-width="3" fill="none"/>
  <!-- face base -->
  <path d="M812 330 Q880 305 961 308 L961 590 L870 580 Q830 555 815 500 Q805 440 808 380Z" fill="#d8796c"/>
  <path d="M822 325 Q890 308 961 312 L961 378 Q900 372 832 378 Q818 350 822 325Z" fill="#e8a292"/>
  <path d="M840 330 Q900 318 961 322 L961 368 Q910 362 850 368 Q835 350 840 330Z" fill="#f0b5a5"/>
  <path d="M812 360 Q820 420 825 470 Q815 480 810 450 Q806 400 812 360Z" fill="#c05e54"/>
  <path d="M828 420 Q845 430 850 445 Q840 452 830 445Z" fill="#f2c4b8"/>
  <path d="M880 430 Q910 425 935 430 Q945 450 940 465 Q910 470 885 462 Q878 445 880 430Z" fill="#eeab9c"/>
  <path d="M822 440 Q840 470 855 478 Q860 500 870 520 Q840 500 825 470Z" fill="#c96558" opacity="0.7"/>
  <path d="M878 412 Q900 405 935 410 Q950 430 948 455 Q925 462 900 460 Q880 450 878 412Z" fill="#eaa898"/>
  <path d="M827 426 Q840 424 847 432 Q842 442 830 440Z" fill="#f4c8bc"/>
  <path d="M815 440 Q835 455 850 470 Q845 495 858 520 Q830 500 818 470Z" fill="#c4624f" opacity="0.6"/>
  <!-- hair -->
  <path d="M803 290 L806 280 L812 274 L815 266 L822 266 L828 260 L836 258 L840 254 L850 254 L856 250 L866 249 L872 245 L882 246 L890 242 L900 243 L908 240 L916 243 L924 242 L932 246 L942 245 L950 250 L961 250 L961 318 L940 312 L915 312 L890 315 L865 318 L845 320 L828 326 L818 336 L815 360 L812 390 L807 405 L800 400 L795 375 L793 340 L797 310 Z" fill="#5c190e"/>
  <g fill="#7a3124" opacity="0.92">
    <path d="M815 305 L826 285 L840 268 L832 292 L850 272 L846 300 L860 282 L852 312 L835 318 L820 322Z"/>
    <path d="M862 300 L872 275 L880 258 L882 285 L895 262 L893 292 L905 270 L902 310 L880 314 L866 316Z"/>
    <path d="M908 295 L915 270 L922 256 L926 282 L938 262 L940 290 L950 268 L955 305 L935 310 L912 311Z"/>
    <path d="M950 280 L958 262 L961 258 L961 312 L952 310Z"/>
    <path d="M797 332 L812 322 L830 316 L815 330 L806 344 L800 356Z"/>
  </g>
  <g fill="#5c190e">
    <path d="M825 266 L830 255 L835 264Z M845 257 L852 247 L857 256Z M865 252 L873 242 L877 251Z M887 248 L895 237 L899 247Z M909 246 L918 236 L921 246Z M929 249 L937 238 L941 249Z M949 254 L956 244 L959 254Z M811 277 L814 265 L821 273Z"/>
  </g>
  <!-- brows -->
  <path d="M825 386 Q860 374 900 382 L902 390 Q860 384 826 395Z" fill="#5a1a10"/>
  <path d="M920 380 Q945 372 961 374 L961 386 Q945 384 925 390Z" fill="#5a1a10"/>
  <!-- eyes -->
  <path d="M842 404 Q862 395 882 404 Q862 409 842 404Z" fill="#4a8cb4"/>
  <ellipse cx="864" cy="402" rx="9" ry="5" fill="#6a2018"/>
  <path d="M840 404 Q862 390 886 403" stroke="#5a1a10" stroke-width="2" fill="none"/>
  <path d="M945 403 Q952 398 961 396" stroke="#6ab8e0" stroke-width="2.5" fill="none"/>
  <path d="M845 412 Q860 420 880 414" stroke="#b8564c" stroke-width="2" fill="none"/>
  <!-- glasses -->
  <path d="M822 392 Q862 385 904 391 Q904 418 897 430 Q892 437 880 437 L852 437 Q839 437 834 428 Q826 412 822 392Z" fill="none" stroke="#0a0505" stroke-width="4.5"/>
  <path d="M903 392 Q916 388 927 391" fill="none" stroke="#0a0505" stroke-width="4.5"/>
  <path d="M926 391 Q945 386 961 386 M927 393 Q931 418 939 430 Q945 437 961 437" fill="none" stroke="#0a0505" stroke-width="4.5"/>
  <path d="M817 387 L827 386 L826 404Z" fill="#0a0505"/>
  <!-- nose -->
  <path d="M900 450 Q918 444 938 450 L936 459 Q918 463 902 459Z" fill="#a84640"/>
  <!-- mustache -->
  <path d="M851 471 Q875 459 905 460 Q935 458 961 463 L961 471 Q930 468 900 468 Q872 470 855 480Z" fill="#6a2218"/>
  <!-- mouth -->
  <path d="M856 478 Q900 465 961 470 L961 514 Q925 520 895 512 Q868 502 856 478Z" fill="#e5705f"/>
  <path d="M871 484 Q910 474 961 478 L961 504 Q925 508 895 504 Q878 496 871 484Z" fill="#5a1815"/>
  <path d="M881 490 Q912 481 950 484 Q949 497 945 502 Q920 506 896 502 Q885 497 881 490Z" fill="#c4e8f2"/>
  <path d="M892 488V500 M903 486V502 M915 485V503 M927 485V503 M938 485V502" stroke="#7aaabf" stroke-width="1.2"/>
  <!-- beard -->
  <path d="M807 470 L813 485 Q824 500 842 512 Q870 532 898 548 Q930 550 961 546 L961 586 Q930 591 900 583 Q860 573 835 553 Q818 536 810 510 Q805 490 807 470Z" fill="#5c1a10"/>
  <path d="M813 485 Q824 500 842 512 Q870 532 898 548 L890 556 Q868 548 850 535 Q835 525 822 510 Z" fill="#8a3226" opacity="0.85"/>
  <path d="M830 530 L838 520 L842 535 L850 528 L852 545 Q840 540 830 530Z" fill="#9a3a2e" opacity="0.7"/>
  <path d="M897 515 Q920 511 943 515 L940 529 Q920 532 899 529Z" fill="#5c1a10"/>
  <path d="M880 528 Q900 530 925 531 Q945 531 961 528 L961 546 Q930 550 898 548 Q888 540 880 528Z" fill="#eba99b"/>
</svg></div>
  <!-- status bar -->
  <div class="a" style="left:290px;top:1002px;width:671px;height:16px;background:#4a4a4a"></div>

  <!-- CSP status bar -->
  <svg style="left:290px;top:1002px" width="671" height="16">
    <rect x="2.5" y="1.5" width="57" height="13" fill="#3a3a3a" stroke="#777"/>
    <path d="M3 14 L59 8 V14Z" fill="#555"/>
    <rect x="59" y="1" width="3" height="14" fill="#666"/>
    <rect x="62.5" y="1.5" width="61" height="13" fill="#3a3a3a" stroke="#777"/>
    <path d="M63 6 L123 2 V2 H63Z" fill="#555"/>
    <path d="M133 8H143 M158 8H168 M163 3V13" stroke="#bbb" stroke-width="1.2"/>
    <rect x="184" y="4" width="8" height="8" fill="#bbb"/>
    <rect x="202.5" y="1.5" width="59" height="13" fill="#3a3a3a" stroke="#777"/>
    <path d="M230 14 L261 6 V14Z" fill="#555"/>
    <rect x="261" y="1" width="3" height="14" fill="#666"/>
    <rect x="264.5" y="1.5" width="59" height="13" fill="#3a3a3a" stroke="#777"/>
    <path d="M265 2 L323 14" stroke="#555"/>
    <g stroke="#bbb" stroke-width="1.2" fill="none"><path d="M336 5 A5 5 0 1 1 334 11"/><path d="M368 5 A5 5 0 1 0 370 11"/><circle cx="388" cy="8" r="5.5"/><path d="M388 4V8"/></g>
    <path d="M331 5 L336 2 V8Z M373 5 L368 2 V8Z" fill="#bbb"/>
    <rect x="401" y="1" width="14" height="14" fill="#555"/><path d="M410 4 L406 8 L410 12" stroke="#bbb" fill="none"/>
  </svg>
  <div class="t" style="left:294px;top:1004px;color:#e8e8e8;font-size:13px">41.1</div>
  <div class="t" style="left:496px;top:1004px;color:#e8e8e8;font-size:13px">0.0</div>
  <div class="a" style="left:0;top:1018px;width:961px;height:2px;background:#151515"></div>
  <div class="a" style="left:900px;top:0;width:61px;height:1020px;background:linear-gradient(90deg,rgba(0,0,0,0) 0%,rgba(0,0,0,0.03) 30%,rgba(0,0,0,0.09) 65%,rgba(0,0,0,0.19) 100%);z-index:5"></div>
</div>

<div id="exp" class="a">
  <div class="a" style="left:0;top:0;width:958px;height:50px;background:#202020"></div>
  <div class="a" style="left:11px;top:11px;width:300px;height:39px;background:#2b2b2b;border-radius:8px 8px 0 0"></div>
  <svg style="left:24px;top:20px" width="16" height="22"><rect x="1" y="1" width="14" height="20" rx="1.5" fill="#8fa6c8"/><rect x="1" y="1" width="14" height="20" rx="1.5" fill="none" stroke="#b0c4e0" stroke-width="0.8"/><path d="M3 7H9 M3 10H13 M3 13H13 M3 16H10" stroke="#fff" stroke-width="1.3"/><rect x="10" y="5" width="3" height="3" fill="#fff"/></svg>
  <div class="t" style="left:55px;top:23px;color:#fff;font-size:15px;font-weight:bold;letter-spacing:0.1px">Documents</div>
  <svg style="left:278px;top:25px" width="14" height="14"><path d="M1 1L13 13M13 1L1 13" stroke="#e8e8e8" stroke-width="1.2"/></svg>
  <svg style="left:333px;top:25px" width="14" height="14"><path d="M7 1V13M1 7H13" stroke="#e8e8e8" stroke-width="1.3"/></svg>
  <svg style="left:803px;top:12px" width="120" height="16"><path d="M2 6.5H14" stroke="#e8e8e8" stroke-width="1"/><rect x="63.5" y="1.5" width="12" height="12" rx="1.5" fill="none" stroke="#e8e8e8" stroke-width="1.1"/><path d="M121 1L132 12M132 1L121 12" stroke="#e8e8e8" stroke-width="1.1"/></svg>
  <div class="a" style="left:0;top:50px;width:958px;height:61px;background:#2b2b2b"></div>
  <svg style="left:0;top:50px" width="260" height="61">
    <g stroke="#e8e8e8" stroke-width="1.3" fill="none">
      <path d="M27 31H42 M33 24 L26 31 L33 38"/>
      <path d="M87 31H102 M95 24 L102 31 L95 38"/>
      <path d="M155 23V39 M148 30 L155 23 L162 30"/>
      <path d="M221 26 A8 8 0 1 0 223 31 M221 21V26H216"/>
    </g>
  </svg>
  <div class="a" style="left:253px;top:61px;width:352px;height:40px;background:#383838;border-radius:6px"></div>
  <svg style="left:270px;top:69px" width="180" height="26"><rect x="1" y="2" width="18" height="13" rx="2" fill="none" stroke="#e0e0e0" stroke-width="1.3"/><path d="M6 19H14 M10 15V19" stroke="#e0e0e0" stroke-width="1.3"/>
  <path d="M45 8 L49 12 L45 16" stroke="#e0e0e0" stroke-width="1.3" fill="none"/><path d="M186 8 L190 12 L186 16" stroke="#e0e0e0" stroke-width="1.3" fill="none"/></svg>
    <div class="t" style="left:344px;top:73px;color:#f0f0f0;font-size:17px">Documents</div>
  <div class="a" style="left:614px;top:61px;width:330px;height:41px;background:#383838;border-radius:6px"></div>
  <div class="t" style="left:632px;top:73px;color:#d0d0d0;font-size:17px">Search Documents</div>
  <svg style="left:912px;top:73px" width="16" height="16"><circle cx="6.5" cy="6.5" r="5" stroke="#e0e0e0" stroke-width="1.3" fill="none"/><path d="M10 10 L14 14" stroke="#e0e0e0" stroke-width="1.4"/></svg>
  <div class="a" style="left:0;top:111px;width:958px;height:1px;background:#383838"></div>
  <div class="a" style="left:0;top:112px;width:958px;height:57px;background:#1b1b1b"></div>
  <svg style="left:0;top:112px" width="958" height="57">
    <circle cx="33" cy="29" r="9" stroke="#e0e0e0" stroke-width="1.2" fill="none"/><path d="M33 24V34 M28 29H38" stroke="#4cc2ff" stroke-width="1.4"/>
    <path d="M92 27 L95 30 L98 27" stroke="#ccc" fill="none"/>
    <path d="M120 11V46" stroke="#3a3a3a"/>
<g transform="translate(0,-2)">
    <path d="M147 20 L158 37 M157 20 L146 37" stroke="#e0e0e0" stroke-width="1.1"/><circle cx="147" cy="39" r="3.5" stroke="#4cc2ff" stroke-width="1.5" fill="none"/><circle cx="157" cy="39" r="3.5" stroke="#4cc2ff" stroke-width="1.5" fill="none"/>
    <rect x="205" y="21" width="11" height="12" rx="3" stroke="#4cc2ff" stroke-width="1.4" fill="none"/><path d="M204 25 Q201 25 201 28 V36 Q201 39 204 39 H210 Q213 39 213 36" stroke="#e0e0e0" stroke-width="1.3" fill="none"/>
    <rect x="264" y="23" width="9" height="15" rx="2" stroke="#555" stroke-width="1.3" fill="none"/><rect x="271" y="26" width="9" height="13" rx="2" stroke="#2a5a78" stroke-width="1.3" fill="none"/><path d="M267 21H275" stroke="#555" stroke-width="1.5"/>
    <rect x="323" y="22" width="19" height="15" rx="2.5" stroke="#e0e0e0" stroke-width="1.3" fill="none"/><path d="M333 19V40 M330 19H336 M330 40H336" stroke="#4cc2ff" stroke-width="1.3"/><text x="325" y="34" fill="#4cc2ff" font-size="11" font-family="Liberation Sans">A</text>
    <path d="M386 26 V37 Q386 39 388 39 H399 Q401 39 401 37 V34" stroke="#e0e0e0" stroke-width="1.3" fill="none"/><path d="M389 33 Q391 24 400 24 V20 L406 26 L400 31 V28 Q393 28 389 33Z" stroke="#4cc2ff" stroke-width="1.3" fill="none"/>
    <path d="M443 20H461 M448 20V17H456V20 M445 20 L446 39H458 L459 20 M450 24V35 M454 24V35" stroke="#e0e0e0" stroke-width="1.2" fill="none"/>
</g>
    <path d="M486 11V46" stroke="#3a3a3a"/>
    <path d="M510 38V20 M505 25 L510 20 L515 25" stroke="#e0e0e0" stroke-width="1.2" fill="none"/><path d="M521 19V38 M516 33 L521 38 L526 33" stroke="#4cc2ff" stroke-width="1.2" fill="none"/>
    <path d="M571 27 L574 30 L577 27" stroke="#ccc" fill="none"/>
    <path d="M616 23H636 M616 27H636 M616 31H636 M616 35H636" stroke="#e0e0e0" stroke-width="1.2"/>
    <path d="M686 27 L689 30 L692 27" stroke="#ccc" fill="none"/>
    <path d="M714 11V46" stroke="#3a3a3a"/>
    <circle cx="735" cy="30" r="2" fill="#e0e0e0"/><circle cx="745" cy="30" r="2" fill="#e0e0e0"/><circle cx="755" cy="30" r="2" fill="#e0e0e0"/>
    <rect x="856" y="22" width="19" height="15" rx="3" stroke="#e0e0e0" stroke-width="1.2" fill="none"/><path d="M868 22V37" stroke="#4cc2ff" stroke-width="1.3"/><path d="M871 26H874 M871 29H874 M871 32H874" stroke="#4cc2ff" stroke-width="1"/>
  </svg>
  <div class="t ex" style="left:53px;top:135px;color:#f0f0f0;font-size:16px">New</div>
  <div class="t ex" style="left:535px;top:135px;color:#f0f0f0;font-size:16px">Sort</div>
  <div class="t ex" style="left:645px;top:135px;color:#f0f0f0;font-size:16px">View</div>
  <div class="t ex" style="left:885px;top:135px;color:#f0f0f0;font-size:16px">Details</div>
  <div class="a" style="left:0;top:169px;width:958px;height:1px;background:#333"></div>
  <div class="a" style="left:4px;top:819px;width:190px;height:38px;background:#2d2d2d;border-radius:4px"></div>
  <div class="a" style="left:197px;top:170px;width:2px;height:820px;background:#222"></div>
<svg style="left:43px;top:188px" width="20" height="20"><path d="M2 9 L10 2 L18 9" stroke="#f26b1d" stroke-width="2.5" fill="none"/><path d="M4 9 L10 4 L16 9 V18 H12 V13 H8 V18 H4Z" fill="#d9d9d9"/></svg><div class="t ex" style="left:68px;top:190px;color:#f3f3f3">Home</div>
<svg style="left:43px;top:228px" width="20" height="20"><rect x="1" y="2" width="17" height="16" rx="2" fill="#1e90e6"/><path d="M2 17 L8 10 L13 14 L18 11 V17Z" fill="#f0f8ff"/><circle cx="13" cy="6" r="2" fill="#fff"/><rect x="3" y="18" width="16" height="2" fill="#1060b0"/></svg><div class="t ex" style="left:68px;top:230px;color:#f3f3f3">Gallery</div>
<svg style="left:43px;top:308px" width="20" height="20"><rect x="1" y="3" width="18" height="13" rx="1.5" fill="#1fa0e8"/><rect x="1" y="3" width="18" height="4" fill="#4ac0f8"/><path d="M3 6h1v1h-1z M3 9h1v1h-1z" fill="#fff"/></svg><div class="t ex" style="left:68px;top:310px;color:#f3f3f3">Desktop</div>
<svg style="left:177px;top:311px" width="14" height="14"><path d="M8 1 L13 6 L10 7 L7 10 L7 12 L2 7 L4 7 L7 4 Z M4 10 L1 13" stroke="#aeb4bc" fill="#aeb4bc" stroke-width="1"/></svg>
<svg style="left:43px;top:348px" width="20" height="20"><rect x="3" y="1" width="14" height="18" rx="1.5" fill="#8fa6c8"/><path d="M6 6H11 M6 9H14 M6 12H14 M6 15H12" stroke="#fff" stroke-width="1.2"/><rect x="12" y="4" width="3" height="3" fill="#fff"/></svg><div class="t ex" style="left:68px;top:350px;color:#f3f3f3">Documents</div>
<svg style="left:177px;top:351px" width="14" height="14"><path d="M8 1 L13 6 L10 7 L7 10 L7 12 L2 7 L4 7 L7 4 Z M4 10 L1 13" stroke="#aeb4bc" fill="#aeb4bc" stroke-width="1"/></svg>
<svg style="left:43px;top:388px" width="20" height="20"><path d="M10 2V14 M5 9 L10 14 L15 9" stroke="#2ec4a0" stroke-width="1.8" fill="none"/><path d="M3 18H17" stroke="#2ec4a0" stroke-width="2"/></svg><div class="t ex" style="left:68px;top:390px;color:#f3f3f3">Downloads</div>
<svg style="left:177px;top:391px" width="14" height="14"><path d="M8 1 L13 6 L10 7 L7 10 L7 12 L2 7 L4 7 L7 4 Z M4 10 L1 13" stroke="#aeb4bc" fill="#aeb4bc" stroke-width="1"/></svg>
<svg style="left:43px;top:428px" width="20" height="20"><rect x="1" y="2" width="18" height="16" rx="2" fill="#1e90e6"/><path d="M1 18 L10 9 L19 18Z" fill="#f0f8ff"/><circle cx="14" cy="6" r="2" fill="#fff"/></svg><div class="t ex" style="left:68px;top:430px;color:#f3f3f3">Pictures</div>
<svg style="left:177px;top:431px" width="14" height="14"><path d="M8 1 L13 6 L10 7 L7 10 L7 12 L2 7 L4 7 L7 4 Z M4 10 L1 13" stroke="#aeb4bc" fill="#aeb4bc" stroke-width="1"/></svg>
<svg style="left:43px;top:468px" width="20" height="20"><circle cx="10" cy="10" r="9.5" fill="#d86b6b"/><path d="M9 14V5 L13 6" stroke="#fff" stroke-width="1.6" fill="none"/><circle cx="8" cy="14" r="2" fill="#fff"/></svg><div class="t ex" style="left:68px;top:470px;color:#f3f3f3">Music</div>
<svg style="left:177px;top:471px" width="14" height="14"><path d="M8 1 L13 6 L10 7 L7 10 L7 12 L2 7 L4 7 L7 4 Z M4 10 L1 13" stroke="#aeb4bc" fill="#aeb4bc" stroke-width="1"/></svg>
<svg style="left:43px;top:508px" width="20" height="20"><rect x="2" y="1" width="16" height="18" rx="2" fill="#8b3fd8"/><path d="M8 6 L14 10 L8 14Z" fill="#fff"/><path d="M3 3h1v1h-1z M3 7h1v1h-1z M3 11h1v1h-1z M3 15h1v1h-1z M16 3h1v1h-1z M16 7h1v1h-1z M16 11h1v1h-1z M16 15h1v1h-1z" fill="#d8b0ff"/></svg><div class="t ex" style="left:68px;top:510px;color:#f3f3f3">Videos</div>
<svg style="left:177px;top:511px" width="14" height="14"><path d="M8 1 L13 6 L10 7 L7 10 L7 12 L2 7 L4 7 L7 4 Z M4 10 L1 13" stroke="#aeb4bc" fill="#aeb4bc" stroke-width="1"/></svg>
<svg style="left:43px;top:548px" width="20" height="20"><path d="M1 4 Q1 3 2 3 H8 L10 5 H18 Q19 5 19 6 V17 Q19 18 18 18 H2 Q1 18 1 17Z" fill="#e8b830"/><path d="M1 7 H19 V17 Q19 18 18 18 H2 Q1 18 1 17Z" fill="#fcd468"/></svg><div class="t ex" style="left:68px;top:550px;color:#f3f3f3">Telegram Desktop</div>
<svg style="left:43px;top:588px" width="20" height="20"><path d="M1 4 Q1 3 2 3 H8 L10 5 H18 Q19 5 19 6 V17 Q19 18 18 18 H2 Q1 18 1 17Z" fill="#e8b830"/><path d="M1 7 H19 V17 Q19 18 18 18 H2 Q1 18 1 17Z" fill="#fcd468"/></svg><div class="t ex" style="left:68px;top:590px;color:#f3f3f3">anime style</div>
<svg style="left:43px;top:628px" width="20" height="20"><path d="M1 4 Q1 3 2 3 H8 L10 5 H18 Q19 5 19 6 V17 Q19 18 18 18 H2 Q1 18 1 17Z" fill="#e8b830"/><path d="M1 7 H19 V17 Q19 18 18 18 H2 Q1 18 1 17Z" fill="#fcd468"/></svg><div class="t ex" style="left:68px;top:630px;color:#f3f3f3">Screenshots</div>
<svg style="left:43px;top:668px" width="20" height="20"><path d="M1 4 Q1 3 2 3 H8 L10 5 H18 Q19 5 19 6 V17 Q19 18 18 18 H2 Q1 18 1 17Z" fill="#e8b830"/><path d="M1 7 H19 V17 Q19 18 18 18 H2 Q1 18 1 17Z" fill="#fcd468"/></svg><div class="t ex" style="left:68px;top:670px;color:#f3f3f3">45</div>
<svg style="left:43px;top:748px" width="20" height="20"><rect x="1" y="3" width="18" height="12" rx="1" fill="#28a8e8"/><path d="M8 16 H12 V18 H6 V17 H14" stroke="#bbb" stroke-width="1.3" fill="none"/></svg><div class="t ex" style="left:68px;top:750px;color:#f3f3f3">This PC</div>
<svg style="left:18px;top:752px" width="10" height="12"><path d="M2 1 L7 6 L2 11" stroke="#aaa" stroke-width="1.2" fill="none"/></svg>
<svg style="left:43px;top:788px" width="20" height="20"><rect x="5" y="6" width="15" height="11" rx="1" fill="#28a8e8"/><circle cx="6" cy="6" r="5" fill="#5ab8f0"/><path d="M10 18 H16" stroke="#ccc" stroke-width="1.5"/></svg><div class="t ex" style="left:68px;top:790px;color:#f3f3f3">Network</div>
<svg style="left:18px;top:792px" width="10" height="12"><path d="M2 1 L7 6 L2 11" stroke="#aaa" stroke-width="1.2" fill="none"/></svg>
<svg style="left:43px;top:828px" width="20" height="20"><ellipse cx="10" cy="12" rx="6" ry="7" fill="#222"/><ellipse cx="10" cy="13" rx="4" ry="5" fill="#f4f4f4"/><circle cx="10" cy="5" r="4" fill="#222"/><path d="M8 6 L10 8 L12 6Z" fill="#f2b020"/><ellipse cx="5" cy="18" rx="3" ry="1.5" fill="#f2b020"/><ellipse cx="15" cy="18" rx="3" ry="1.5" fill="#f2b020"/></svg><div class="t ex" style="left:68px;top:830px;color:#f3f3f3">Linux</div>
<svg style="left:18px;top:832px" width="10" height="12"><path d="M2 1 L7 6 L2 11" stroke="#aaa" stroke-width="1.2" fill="none"/></svg>

  <div class="a" style="left:12px;top:278px;width:174px;height:1px;background:#3a3a3a"></div>
  <div class="a" style="left:12px;top:718px;width:174px;height:1px;background:#3a3a3a"></div>
  <div class="t ex" style="left:237px;top:178px;color:#e0e0e0">Name</div>
  <svg style="left:378px;top:169px" width="12" height="8"><path d="M1 6 L6 2 L11 6" stroke="#aaa" fill="none"/></svg>
  <div class="a" style="left:539px;top:172px;width:1px;height:28px;background:#444"></div>
  <div class="t ex" style="left:547px;top:178px;color:#e0e0e0">Date modified</div>
  <div class="a" style="left:719px;top:172px;width:1px;height:28px;background:#444"></div>
  <div class="t ex" style="left:727px;top:178px;color:#e0e0e0">Type</div>
  <div class="a" style="left:869px;top:172px;width:1px;height:28px;background:#444"></div>
  <div class="t ex" style="left:877px;top:178px;color:#e0e0e0">Size</div>
<svg style="left:224px;top:199px" width="18" height="22"><path d="M1.5 1.5H10.5L16.5 7.5V20.5H1.5Z" fill="#f6f6f6"/><path d="M10.5 1.5V7.5H16.5Z" fill="#dcdcdc"/><path d="M5 12.5 C5 9 9 8 11.5 8.5 C14 9 14.5 12 12 13.5 C10 15 8 14 9 12.5 C10 11.5 12 12 11 14 L9.5 17" stroke="#7a7a7a" stroke-width="1.5" fill="none" stroke-linecap="round"/></svg><div class="t ex" style="left:248px;top:203px;color:#f3f3f3">Animation fight</div><div class="t ex" style="left:547px;top:203px">1/31/2025 5:57 PM</div><div class="t ex" style="left:727px;top:203px;transform:scaleX(0.88);transform-origin:0 0">CLIP STUDIO FOR...</div><div class="t ex" style="left:819px;width:119px;text-align:right;top:203px">57,752</div>
<svg style="left:224px;top:236px" width="18" height="22"><path d="M1.5 1.5H10.5L16.5 7.5V20.5H1.5Z" fill="#f6f6f6"/><path d="M10.5 1.5V7.5H16.5Z" fill="#dcdcdc"/><path d="M5 12.5 C5 9 9 8 11.5 8.5 C14 9 14.5 12 12 13.5 C10 15 8 14 9 12.5 C10 11.5 12 12 11 14 L9.5 17" stroke="#7a7a7a" stroke-width="1.5" fill="none" stroke-linecap="round"/></svg><div class="t ex" style="left:248px;top:240px;color:#f3f3f3">Animation kfs</div><div class="t ex" style="left:547px;top:240px">1/26/2025 11:40 PM</div><div class="t ex" style="left:727px;top:240px;transform:scaleX(0.88);transform-origin:0 0">CLIP STUDIO FOR...</div><div class="t ex" style="left:819px;width:119px;text-align:right;top:240px">597,481</div>
<svg style="left:224px;top:273px" width="18" height="22"><path d="M1.5 1.5H10.5L16.5 7.5V20.5H1.5Z" fill="#f6f6f6"/><path d="M10.5 1.5V7.5H16.5Z" fill="#dcdcdc"/><path d="M5 12.5 C5 9 9 8 11.5 8.5 C14 9 14.5 12 12 13.5 C10 15 8 14 9 12.5 C10 11.5 12 12 11 14 L9.5 17" stroke="#7a7a7a" stroke-width="1.5" fill="none" stroke-linecap="round"/></svg><div class="t ex" style="left:248px;top:277px;color:#f3f3f3">Animation semi senior</div><div class="t ex" style="left:547px;top:277px">1/23/2025 3:06 AM</div><div class="t ex" style="left:727px;top:277px;transform:scaleX(0.88);transform-origin:0 0">CLIP STUDIO FOR...</div><div class="t ex" style="left:819px;width:119px;text-align:right;top:277px">98,539</div>
<svg style="left:224px;top:310px" width="18" height="22"><path d="M1.5 1.5H10.5L16.5 7.5V20.5H1.5Z" fill="#f6f6f6"/><path d="M10.5 1.5V7.5H16.5Z" fill="#dcdcdc"/><path d="M5 12.5 C5 9 9 8 11.5 8.5 C14 9 14.5 12 12 13.5 C10 15 8 14 9 12.5 C10 11.5 12 12 11 14 L9.5 17" stroke="#7a7a7a" stroke-width="1.5" fill="none" stroke-linecap="round"/></svg><div class="t ex" style="left:248px;top:314px;color:#f3f3f3">Animation</div><div class="t ex" style="left:547px;top:314px">10/16/2024 10:33 AM</div><div class="t ex" style="left:727px;top:314px;transform:scaleX(0.88);transform-origin:0 0">CLIP STUDIO FOR...</div><div class="t ex" style="left:819px;width:119px;text-align:right;top:314px">12,819</div>
<svg style="left:224px;top:347px" width="18" height="22"><path d="M1.5 1.5H10.5L16.5 7.5V20.5H1.5Z" fill="#f6f6f6"/><path d="M10.5 1.5V7.5H16.5Z" fill="#dcdcdc"/><path d="M5 12.5 C5 9 9 8 11.5 8.5 C14 9 14.5 12 12 13.5 C10 15 8 14 9 12.5 C10 11.5 12 12 11 14 L9.5 17" stroke="#7a7a7a" stroke-width="1.5" fill="none" stroke-linecap="round"/></svg><div class="t ex" style="left:248px;top:351px;color:#f3f3f3">Animation2 - Copy</div><div class="t ex" style="left:547px;top:351px">10/22/2024 1:59 PM</div><div class="t ex" style="left:727px;top:351px;transform:scaleX(0.88);transform-origin:0 0">CLIP STUDIO FOR...</div><div class="t ex" style="left:819px;width:119px;text-align:right;top:351px">4,079</div>
<svg style="left:224px;top:384px" width="18" height="22"><path d="M1.5 1.5H10.5L16.5 7.5V20.5H1.5Z" fill="#f6f6f6"/><path d="M10.5 1.5V7.5H16.5Z" fill="#dcdcdc"/><path d="M5 12.5 C5 9 9 8 11.5 8.5 C14 9 14.5 12 12 13.5 C10 15 8 14 9 12.5 C10 11.5 12 12 11 14 L9.5 17" stroke="#7a7a7a" stroke-width="1.5" fill="none" stroke-linecap="round"/></svg><div class="t ex" style="left:248px;top:388px;color:#f3f3f3">Animation2</div><div class="t ex" style="left:547px;top:388px">10/22/2024 1:59 PM</div><div class="t ex" style="left:727px;top:388px;transform:scaleX(0.88);transform-origin:0 0">CLIP STUDIO FOR...</div><div class="t ex" style="left:819px;width:119px;text-align:right;top:388px">4,079</div>
<svg style="left:224px;top:421px" width="18" height="22"><path d="M1.5 1.5H10.5L16.5 7.5V20.5H1.5Z" fill="#f6f6f6"/><path d="M10.5 1.5V7.5H16.5Z" fill="#dcdcdc"/><path d="M5 12.5 C5 9 9 8 11.5 8.5 C14 9 14.5 12 12 13.5 C10 15 8 14 9 12.5 C10 11.5 12 12 11 14 L9.5 17" stroke="#7a7a7a" stroke-width="1.5" fill="none" stroke-linecap="round"/></svg><div class="t ex" style="left:248px;top:425px;color:#f3f3f3">Animation3 - Copy</div><div class="t ex" style="left:547px;top:425px">12/13/2024 3:26 PM</div><div class="t ex" style="left:727px;top:425px;transform:scaleX(0.88);transform-origin:0 0">CLIP STUDIO FOR...</div><div class="t ex" style="left:819px;width:119px;text-align:right;top:425px">150,831</div>
<svg style="left:224px;top:458px" width="18" height="22"><path d="M1.5 1.5H10.5L16.5 7.5V20.5H1.5Z" fill="#f6f6f6"/><path d="M10.5 1.5V7.5H16.5Z" fill="#dcdcdc"/><path d="M5 12.5 C5 9 9 8 11.5 8.5 C14 9 14.5 12 12 13.5 C10 15 8 14 9 12.5 C10 11.5 12 12 11 14 L9.5 17" stroke="#7a7a7a" stroke-width="1.5" fill="none" stroke-linecap="round"/></svg><div class="t ex" style="left:248px;top:462px;color:#f3f3f3">Animation3</div><div class="t ex" style="left:547px;top:462px">12/13/2024 3:26 PM</div><div class="t ex" style="left:727px;top:462px;transform:scaleX(0.88);transform-origin:0 0">CLIP STUDIO FOR...</div><div class="t ex" style="left:819px;width:119px;text-align:right;top:462px">150,831</div>
<svg style="left:224px;top:495px" width="18" height="22"><path d="M1.5 1.5H10.5L16.5 7.5V20.5H1.5Z" fill="#f6f6f6"/><path d="M10.5 1.5V7.5H16.5Z" fill="#dcdcdc"/><path d="M5 12.5 C5 9 9 8 11.5 8.5 C14 9 14.5 12 12 13.5 C10 15 8 14 9 12.5 C10 11.5 12 12 11 14 L9.5 17" stroke="#7a7a7a" stroke-width="1.5" fill="none" stroke-linecap="round"/></svg><div class="t ex" style="left:248px;top:499px;color:#f3f3f3">Illustration - Copy</div><div class="t ex" style="left:547px;top:499px">1/15/2024 11:17 PM</div><div class="t ex" style="left:727px;top:499px;transform:scaleX(0.88);transform-origin:0 0">CLIP STUDIO FOR...</div><div class="t ex" style="left:819px;width:119px;text-align:right;top:499px">273</div>
<svg style="left:224px;top:532px" width="18" height="22"><path d="M1.5 2.5H10.5L16.5 8.5V21.5H1.5Z" fill="#fafafa"/><path d="M10.5 2.5V8.5H16.5Z" fill="#fff" stroke="#777" stroke-width="0.8"/><rect x="5" y="10" width="8" height="8" rx="0.5" fill="#1a7ad0"/><path d="M5 18 L9 13 L13 18Z" fill="#40c0f0"/><circle cx="11.5" cy="11.5" r="0.9" fill="#fff"/></svg><div class="t ex" style="left:248px;top:536px;color:#f3f3f3">Illustration - Copy</div><div class="t ex" style="left:547px;top:536px">7/14/2024 6:43 PM</div><div class="t ex" style="left:727px;top:536px">PNG File</div><div class="t ex" style="left:819px;width:119px;text-align:right;top:536px">251</div>
<svg style="left:224px;top:569px" width="18" height="22"><path d="M1.5 1.5H10.5L16.5 7.5V20.5H1.5Z" fill="#f6f6f6"/><path d="M10.5 1.5V7.5H16.5Z" fill="#dcdcdc"/><path d="M5 12.5 C5 9 9 8 11.5 8.5 C14 9 14.5 12 12 13.5 C10 15 8 14 9 12.5 C10 11.5 12 12 11 14 L9.5 17" stroke="#7a7a7a" stroke-width="1.5" fill="none" stroke-linecap="round"/></svg><div class="t ex" style="left:248px;top:573px;color:#f3f3f3">Illustration</div><div class="t ex" style="left:547px;top:573px">1/15/2024 11:17 PM</div><div class="t ex" style="left:727px;top:573px;transform:scaleX(0.88);transform-origin:0 0">CLIP STUDIO FOR...</div><div class="t ex" style="left:819px;width:119px;text-align:right;top:573px">273</div>
<svg style="left:224px;top:606px" width="18" height="22"><path d="M1.5 2.5H10.5L16.5 8.5V21.5H1.5Z" fill="#fafafa"/><path d="M10.5 2.5V8.5H16.5Z" fill="#fff" stroke="#777" stroke-width="0.8"/><rect x="5" y="10" width="8" height="8" rx="0.5" fill="#1a7ad0"/><path d="M5 18 L9 13 L13 18Z" fill="#40c0f0"/><circle cx="11.5" cy="11.5" r="0.9" fill="#fff"/></svg><div class="t ex" style="left:248px;top:610px;color:#f3f3f3">Illustration</div><div class="t ex" style="left:547px;top:610px">7/14/2024 6:43 PM</div><div class="t ex" style="left:727px;top:610px">PNG File</div><div class="t ex" style="left:819px;width:119px;text-align:right;top:610px">251</div>
<svg style="left:224px;top:643px" width="18" height="22"><path d="M1.5 1.5H10.5L16.5 7.5V20.5H1.5Z" fill="#f6f6f6"/><path d="M10.5 1.5V7.5H16.5Z" fill="#dcdcdc"/><path d="M5 12.5 C5 9 9 8 11.5 8.5 C14 9 14.5 12 12 13.5 C10 15 8 14 9 12.5 C10 11.5 12 12 11 14 L9.5 17" stroke="#7a7a7a" stroke-width="1.5" fill="none" stroke-linecap="round"/></svg><div class="t ex" style="left:248px;top:647px;color:#f3f3f3">Illustration2 - Copy</div><div class="t ex" style="left:547px;top:647px">1/15/2024 11:17 PM</div><div class="t ex" style="left:727px;top:647px;transform:scaleX(0.88);transform-origin:0 0">CLIP STUDIO FOR...</div><div class="t ex" style="left:819px;width:119px;text-align:right;top:647px">314</div>
<svg style="left:224px;top:680px" width="18" height="22"><path d="M1.5 1.5H10.5L16.5 7.5V20.5H1.5Z" fill="#f6f6f6"/><path d="M10.5 1.5V7.5H16.5Z" fill="#dcdcdc"/><path d="M5 12.5 C5 9 9 8 11.5 8.5 C14 9 14.5 12 12 13.5 C10 15 8 14 9 12.5 C10 11.5 12 12 11 14 L9.5 17" stroke="#7a7a7a" stroke-width="1.5" fill="none" stroke-linecap="round"/></svg><div class="t ex" style="left:248px;top:684px;color:#f3f3f3">Illustration2</div><div class="t ex" style="left:547px;top:684px">1/15/2024 11:17 PM</div><div class="t ex" style="left:727px;top:684px;transform:scaleX(0.88);transform-origin:0 0">CLIP STUDIO FOR...</div><div class="t ex" style="left:819px;width:119px;text-align:right;top:684px">314</div>
<svg style="left:224px;top:717px" width="18" height="22"><path d="M1.5 1.5H10.5L16.5 7.5V20.5H1.5Z" fill="#f6f6f6"/><path d="M10.5 1.5V7.5H16.5Z" fill="#dcdcdc"/><path d="M5 12.5 C5 9 9 8 11.5 8.5 C14 9 14.5 12 12 13.5 C10 15 8 14 9 12.5 C10 11.5 12 12 11 14 L9.5 17" stroke="#7a7a7a" stroke-width="1.5" fill="none" stroke-linecap="round"/></svg><div class="t ex" style="left:248px;top:721px;color:#f3f3f3">Illustration3 - Copy</div><div class="t ex" style="left:547px;top:721px">1/22/2024 12:50 AM</div><div class="t ex" style="left:727px;top:721px;transform:scaleX(0.88);transform-origin:0 0">CLIP STUDIO FOR...</div><div class="t ex" style="left:819px;width:119px;text-align:right;top:721px">10,918</div>
<svg style="left:224px;top:754px" width="18" height="22"><path d="M1.5 1.5H10.5L16.5 7.5V20.5H1.5Z" fill="#f6f6f6"/><path d="M10.5 1.5V7.5H16.5Z" fill="#dcdcdc"/><path d="M5 12.5 C5 9 9 8 11.5 8.5 C14 9 14.5 12 12 13.5 C10 15 8 14 9 12.5 C10 11.5 12 12 11 14 L9.5 17" stroke="#7a7a7a" stroke-width="1.5" fill="none" stroke-linecap="round"/></svg><div class="t ex" style="left:248px;top:758px;color:#f3f3f3">Illustration3</div><div class="t ex" style="left:547px;top:758px">1/22/2024 12:50 AM</div><div class="t ex" style="left:727px;top:758px;transform:scaleX(0.88);transform-origin:0 0">CLIP STUDIO FOR...</div><div class="t ex" style="left:819px;width:119px;text-align:right;top:758px">10,918</div>
<svg style="left:224px;top:791px" width="18" height="22"><path d="M1.5 1.5H10.5L16.5 7.5V20.5H1.5Z" fill="#f6f6f6"/><path d="M10.5 1.5V7.5H16.5Z" fill="#dcdcdc"/><path d="M5 12.5 C5 9 9 8 11.5 8.5 C14 9 14.5 12 12 13.5 C10 15 8 14 9 12.5 C10 11.5 12 12 11 14 L9.5 17" stroke="#7a7a7a" stroke-width="1.5" fill="none" stroke-linecap="round"/></svg><div class="t ex" style="left:248px;top:795px;color:#f3f3f3">Illustration4 - Copy</div><div class="t ex" style="left:547px;top:795px">1/22/2024 1:12 AM</div><div class="t ex" style="left:727px;top:795px;transform:scaleX(0.88);transform-origin:0 0">CLIP STUDIO FOR...</div><div class="t ex" style="left:819px;width:119px;text-align:right;top:795px">1,026</div>
<svg style="left:224px;top:828px" width="18" height="22"><path d="M1.5 1.5H10.5L16.5 7.5V20.5H1.5Z" fill="#f6f6f6"/><path d="M10.5 1.5V7.5H16.5Z" fill="#dcdcdc"/><path d="M5 12.5 C5 9 9 8 11.5 8.5 C14 9 14.5 12 12 13.5 C10 15 8 14 9 12.5 C10 11.5 12 12 11 14 L9.5 17" stroke="#7a7a7a" stroke-width="1.5" fill="none" stroke-linecap="round"/></svg><div class="t ex" style="left:248px;top:832px;color:#f3f3f3">Illustration4</div><div class="t ex" style="left:547px;top:832px">1/22/2024 1:12 AM</div><div class="t ex" style="left:727px;top:832px;transform:scaleX(0.88);transform-origin:0 0">CLIP STUDIO FOR...</div><div class="t ex" style="left:819px;width:119px;text-align:right;top:832px">1,026</div>
<svg style="left:224px;top:865px" width="18" height="22"><path d="M1.5 1.5H10.5L16.5 7.5V20.5H1.5Z" fill="#f6f6f6"/><path d="M10.5 1.5V7.5H16.5Z" fill="#dcdcdc"/><path d="M5 12.5 C5 9 9 8 11.5 8.5 C14 9 14.5 12 12 13.5 C10 15 8 14 9 12.5 C10 11.5 12 12 11 14 L9.5 17" stroke="#7a7a7a" stroke-width="1.5" fill="none" stroke-linecap="round"/></svg><div class="t ex" style="left:248px;top:869px;color:#f3f3f3">Illustration5 - Copy</div><div class="t ex" style="left:547px;top:869px">1/24/2024 2:47 PM</div><div class="t ex" style="left:727px;top:869px;transform:scaleX(0.88);transform-origin:0 0">CLIP STUDIO FOR...</div><div class="t ex" style="left:819px;width:119px;text-align:right;top:869px">2,272</div>
<svg style="left:224px;top:902px" width="18" height="22"><path d="M1.5 1.5H10.5L16.5 7.5V20.5H1.5Z" fill="#f6f6f6"/><path d="M10.5 1.5V7.5H16.5Z" fill="#dcdcdc"/><path d="M5 12.5 C5 9 9 8 11.5 8.5 C14 9 14.5 12 12 13.5 C10 15 8 14 9 12.5 C10 11.5 12 12 11 14 L9.5 17" stroke="#7a7a7a" stroke-width="1.5" fill="none" stroke-linecap="round"/></svg><div class="t ex" style="left:248px;top:906px;color:#f3f3f3">Illustration5</div><div class="t ex" style="left:547px;top:906px">1/24/2024 2:47 PM</div><div class="t ex" style="left:727px;top:906px;transform:scaleX(0.88);transform-origin:0 0">CLIP STUDIO FOR...</div><div class="t ex" style="left:819px;width:119px;text-align:right;top:906px">2,272</div>
<svg style="left:224px;top:939px" width="18" height="22"><path d="M1.5 1.5H10.5L16.5 7.5V20.5H1.5Z" fill="#f6f6f6"/><path d="M10.5 1.5V7.5H16.5Z" fill="#dcdcdc"/><path d="M5 12.5 C5 9 9 8 11.5 8.5 C14 9 14.5 12 12 13.5 C10 15 8 14 9 12.5 C10 11.5 12 12 11 14 L9.5 17" stroke="#7a7a7a" stroke-width="1.5" fill="none" stroke-linecap="round"/></svg><div class="t ex" style="left:248px;top:943px;color:#f3f3f3">Illustration6 - Copy</div><div class="t ex" style="left:547px;top:943px">1/24/2024 4:32 PM</div><div class="t ex" style="left:727px;top:943px;transform:scaleX(0.88);transform-origin:0 0">CLIP STUDIO FOR...</div><div class="t ex" style="left:819px;width:119px;text-align:right;top:943px">8,141</div>

  <div class="a" style="left:945px;top:290px;width:6px;height:69px;background:#8a8a8a;border-radius:2px"></div>
  <div class="a" style="left:221px;top:977px;width:654px;height:6px;background:#8a8a8a;border-radius:2px"></div>
  <div class="a" style="left:0;top:990px;width:958px;height:28px;background:#1b1b1b"></div>
  <div class="t ex" style="left:17px;top:997px;color:#d8d8d8;font-size:14px">224 items</div><div class="t ex" style="left:93px;top:997px;color:#d8d8d8;font-size:14px">|</div><div class="t ex" style="left:106px;top:997px;color:#e8e8e8;font-size:14px">1 item selected</div><div class="t ex" style="left:215px;top:997px;color:#e8e8e8;font-size:14px">7.52 MB</div><div class="t ex" style="left:279px;top:997px;color:#e8e8e8;font-size:14px">|</div>
  <div class="a" style="left:898px;top:991px;width:27px;height:27px;background:#2e2e2e;border-radius:3px"></div>
  <div class="a" style="left:0;top:0;width:958px;height:1018px;border:1px solid #141414;z-index:3;pointer-events:none"></div>
  <svg style="left:900px;top:993px" width="54" height="24"><path d="M6 8H19 M6 12H19 M6 16H19 M6 20H19" stroke="#e0e0e0" stroke-width="1.3"/><rect x="5" y="5" width="15" height="16" fill="none" stroke="#e0e0e0" stroke-width="1"/><rect x="31" y="4" width="16" height="14" fill="none" stroke="#e0e0e0" stroke-width="1.5"/><path d="M31 17H47" stroke="#e0e0e0" stroke-width="2"/></svg>
</div>


<div id="tb" class="a">
  <!-- weather -->
  <svg style="left:22px;top:7px" width="40" height="40">
    <defs><linearGradient id="cld" x1="0" y1="0" x2="0" y2="1"><stop offset="0" stop-color="#d8f0fc"/><stop offset="1" stop-color="#8cc4ea"/></linearGradient></defs>
    <circle cx="13" cy="15" r="9" fill="#f2a020"/><circle cx="19" cy="9" r="8.5" fill="#1d1d1d"/>
    <path d="M8 36 Q3 36 3 30 Q3 25 8 24 Q10 18 17 18 Q24 18 26 23 Q33 23 33 30 Q33 36 28 36Z" fill="url(#cld)"/>
    <circle cx="26.5" cy="10.5" r="9.5" fill="#f4a0aa"/>
    <text x="22.5" y="15.5" fill="#1a1a1a" font-size="13" font-family="Liberation Sans">1</text>
  </svg>
  <div class="t" style="left:64px;top:12px;color:#fff;font-size:14.5px">56°F</div>
  <div class="t" style="left:64px;top:31px;color:#d8d8d8;font-size:15.5px">Mostly cloudy</div>
  <!-- start -->
  <svg style="left:529px;top:15px" width="32" height="32">
    <rect x="1" y="1" width="14" height="14" fill="#3ab4f0"/><rect x="17" y="1" width="14" height="14" fill="#4cc8f8"/>
    <rect x="1" y="17" width="14" height="14" fill="#1a9ee6"/><rect x="17" y="17" width="14" height="14" fill="#30b0f0"/>
  </svg>
  <div class="a" style="left:576px;top:10px;width:274px;height:40px;background:#2c2c2c;border-radius:20px;border:1px solid #333"></div>
  <svg style="left:590px;top:20px" width="22" height="22"><circle cx="8.5" cy="8.5" r="7" stroke="#f0f0f0" stroke-width="1.8" fill="none"/><path d="M13.5 13.5 L19 19" stroke="#f0f0f0" stroke-width="2"/></svg>
  <div class="t" style="left:621px;top:22px;color:#e8e8e8;font-size:17px">Search</div>
  <svg style="left:786px;top:14px" width="60" height="32">
    <path d="M14 8 Q10 2 5 6 Q2 10 8 16 L14 20 L20 16 Q26 10 23 6 Q18 2 14 8Z" fill="#e81818"/>
    <path d="M4 22 L9 21 Q11 26 8 28 Q5 28 4 22Z M13 21 L21 19 Q22 25 18 26 Q14 26 13 21Z" fill="#9ad0f0" stroke="#e03030" stroke-width="1.5"/><path d="M9 23 L13 22" stroke="#e03030" stroke-width="1.2"/>
    <path d="M28 6 L35 3 L40 6 L45 3 L52 6 L54 13 L49 13 L49 28 L33 28 L33 13 L28 13Z" fill="#e02020"/>
  </svg>
  <!-- task view -->
  <svg style="left:866px;top:15px" width="32" height="32"><rect x="2" y="10" width="18" height="18" rx="2" fill="#5a5a5a"/><rect x="9" y="3" width="19" height="17" rx="2" fill="#d8d8d8"/></svg>
  <!-- copilot -->
  <svg style="left:920px;top:15px" width="32" height="32">
    <defs><linearGradient id="cpa" x1="0" y1="0" x2="1" y2="1"><stop offset="0" stop-color="#2f9bf0"/><stop offset="0.5" stop-color="#3ad07a"/><stop offset="1" stop-color="#f0d020"/></linearGradient>
    <linearGradient id="cpb" x1="0" y1="0" x2="1" y2="1"><stop offset="0" stop-color="#b050f0"/><stop offset="0.5" stop-color="#f05090"/><stop offset="1" stop-color="#f07030"/></linearGradient></defs>
    <path d="M8 3 H17 Q20 3 19 7 L14 24 Q13 27 10 27 H6 Q2 27 3 23 L6 7 Q7 3 8 3Z" fill="url(#cpa)"/>
    <path d="M15 6 H26 Q30 6 29 10 L26 25 Q25 29 21 29 H13 Q10 29 11 26 L16 9 Q17 6 15 6Z" fill="url(#cpb)"/>
  </svg>
  <!-- explorer (active) -->
  <div class="a" style="left:967px;top:3px;width:48px;height:49px;background:#2a2a2a;border-radius:5px"></div>
  <svg style="left:974px;top:14px" width="32" height="30"><path d="M3 4 Q3 2 5 2 H12 L15 5 H28 Q30 5 30 7 V25 Q30 27 28 27 H5 Q3 27 3 25Z" fill="#f0b428"/><path d="M3 8 H30 V25 Q30 27 28 27 H5 Q3 27 3 25Z" fill="#fbcf4a"/><rect x="7" y="19" width="19" height="8" rx="1" fill="#1e7cd8"/><rect x="10" y="21" width="13" height="1.5" fill="#8cc8f8"/></svg>
  <div class="a" style="left:980px;top:49px;width:22px;height:3px;background:#4cc2ff;border-radius:2px"></div>
  <!-- edge -->
  <svg style="left:1030px;top:13px" width="34" height="34"><path d="M3 18 Q3 4 17 3 Q30 3 31 15 Q31 22 24 22 H12 Q14 28 22 28 Q26 28 29 26 Q24 33 15 32 Q3 30 3 18Z" fill="#1f7ed0"/><path d="M3 16 Q6 5 17 4 Q28 4 30 12 Q26 8 20 9 Q12 10 10 20 Q6 22 3 16Z" fill="#38c070"/><circle cx="11" cy="24" r="7" fill="#8a8a8a"/><circle cx="11" cy="21" r="2.5" fill="#ddd"/><path d="M6 29 Q11 24 16 29" fill="#ddd"/></svg>
  <div class="a" style="left:1042px;top:50px;width:8px;height:3px;background:#888;border-radius:2px"></div>
  <!-- telegram -->
  <svg style="left:1086px;top:15px" width="30" height="30"><circle cx="15" cy="15" r="14" fill="#2aa0e0"/><path d="M7 15 L22 9 L19 22 L14 18 L11 21 L11 17 Z" fill="#fff"/></svg>
  <!-- discord -->
  <svg style="left:1140px;top:14px" width="32" height="32"><circle cx="16" cy="16" r="15" fill="#5865f2"/><path d="M9 11 Q12 9 14 9 L15 10 H17 L18 9 Q20 9 23 11 Q25 16 24 21 Q22 23 20 23 L19 21 Q17 22 13 21 L12 23 Q10 23 8 21 Q7 16 9 11Z" fill="#fff"/><circle cx="13" cy="16" r="1.6" fill="#5865f2"/><circle cx="19" cy="16" r="1.6" fill="#5865f2"/></svg>
  <!-- green app -->
  <svg style="left:1195px;top:14px" width="32" height="32"><rect x="1" y="6" width="30" height="21" rx="3" fill="#1a8a3a"/><rect x="8" y="2" width="16" height="28" rx="3" fill="#2ab04a"/></svg>
  <!-- pen app -->
  <svg style="left:1250px;top:13px" width="32" height="32"><rect x="1" y="1" width="30" height="30" rx="6" fill="#1e9ef0"/><path d="M10 25 L11 19 L21 7 L25 11 L15 23Z" fill="#fff"/></svg>
  <div class="a" style="left:1262px;top:50px;width:8px;height:3px;background:#888;border-radius:2px"></div>
  <!-- W app -->
  <svg style="left:1304px;top:10px" width="40" height="38"><path d="M4 16 L12 6 L26 6 L32 16 L26 30 L12 30Z" fill="#1a2a60" stroke="#aaa" stroke-width="1.5"/><text x="9" y="26" fill="#fff" font-size="16" font-weight="bold" font-family="Liberation Sans">W</text><circle cx="28" cy="9" r="8" fill="#2ab04a"/><path d="M24 9 L27 12 L32 6" stroke="#fff" stroke-width="2" fill="none"/></svg>
  <div class="a" style="left:1317px;top:50px;width:8px;height:3px;background:#888;border-radius:2px"></div>
  <!-- clip studio -->
  <svg style="left:1360px;top:13px" width="32" height="32"><rect x="1" y="1" width="30" height="30" rx="6" fill="#e8e8e8"/><path d="M10 18 C5 10 15 5 21 8 C27 12 21 19 15 16 C12 14 16 11 19 13 M11 19 L17 24" stroke="#333" stroke-width="2.5" fill="none"/></svg>
  <div class="a" style="left:1372px;top:50px;width:8px;height:3px;background:#888;border-radius:2px"></div>
  <!-- tray -->
  <svg style="left:1610px;top:22px" width="20" height="14"><path d="M2 11 L9 4 L16 11" stroke="#fff" stroke-width="1.6" fill="none"/></svg>
  <div class="t" style="left:1660px;top:24px;color:#fff;font-size:17px">ع</div>
  <svg style="left:1700px;top:18px" width="90" height="26">
    <rect x="3" y="3" width="15" height="12" rx="1" stroke="#fff" stroke-width="1.3" fill="none"/><path d="M8 19H15 M11 15V19" stroke="#fff" stroke-width="1.3"/><rect x="18" y="2" width="5" height="7" rx="1" stroke="#fff" stroke-width="1.2" fill="#1c1c1c"/><path d="M20.5 9V20" stroke="#fff" stroke-width="1.2"/>
    <path d="M34 8H37 L42 4 V18 L37 14 H34Z" stroke="#fff" stroke-width="1.3" fill="none"/><path d="M45 8 Q47 11 45 14 M48 6 Q51 11 48 16" stroke="#aaa" stroke-width="1.2" fill="none"/>
    <rect x="63" y="6" width="16" height="10" rx="2" stroke="#fff" stroke-width="1.3" fill="none"/><rect x="79" y="9" width="2" height="4" fill="#fff"/><path d="M67 3 L65 9 L69 9 L67 14" stroke="#fff" stroke-width="1.2" fill="none"/><rect x="65" y="9" width="5" height="5" fill="#fff"/>
  </svg>
  <div class="t" style="left:1765px;width:100px;text-align:right;top:13px;color:#fff;font-size:14.5px">7:19 PM</div>
  <div class="t" style="left:1765px;width:100px;text-align:right;top:32px;color:#fff;font-size:14.5px">2/7/2025</div>
  <svg style="left:1874px;top:19px" width="22" height="24"><path d="M11 2 Q4 2 4 10 V15 L2 18 H20 L18 15 V10 Q18 2 11 2Z" fill="#8ad0f8"/><path d="M8 20 Q11 24 14 20Z" fill="#8ad0f8"/></svg>
</div>


<svg style="left:0;top:0;z-index:50;opacity:0.42" width="1920" height="1080">
  <g stroke="#a0a0a0" fill="none" stroke-width="11" stroke-linecap="round" stroke-linejoin="round">
    <path d="M884 957 V1000 Q884 1013 870 1013 Q851 1013 851 995 Q851 982 861 977"/>
  </g>
  <g fill="none" stroke="#a0a0a0" stroke-width="11">
    <circle cx="922" cy="990" r="15"/>
    <circle cx="1053" cy="997" r="15"/>
  </g>
  <g stroke="#a0a0a0" fill="none" stroke-width="11" stroke-linecap="round">
    <path d="M884 1008 H900 M944 1008 H1040"/>
    <path d="M966 982 V1004 M986 982 V1004 M1013 982 V1004"/>
  </g>
  <g fill="#a0a0a0">
    <circle cx="913" cy="959" r="6.5"/><circle cx="930" cy="959" r="6.5"/>
    <circle cx="952" cy="973" r="6.5"/><circle cx="970" cy="973" r="6.5"/>
  </g>
  <text x="844" y="1051" fill="#a0a0a0" stroke="#a0a0a0" stroke-width="1.6" font-size="41" font-family="Liberation Sans" letter-spacing="-0.8">mostaql.com</text>
</svg>
</body></html>
